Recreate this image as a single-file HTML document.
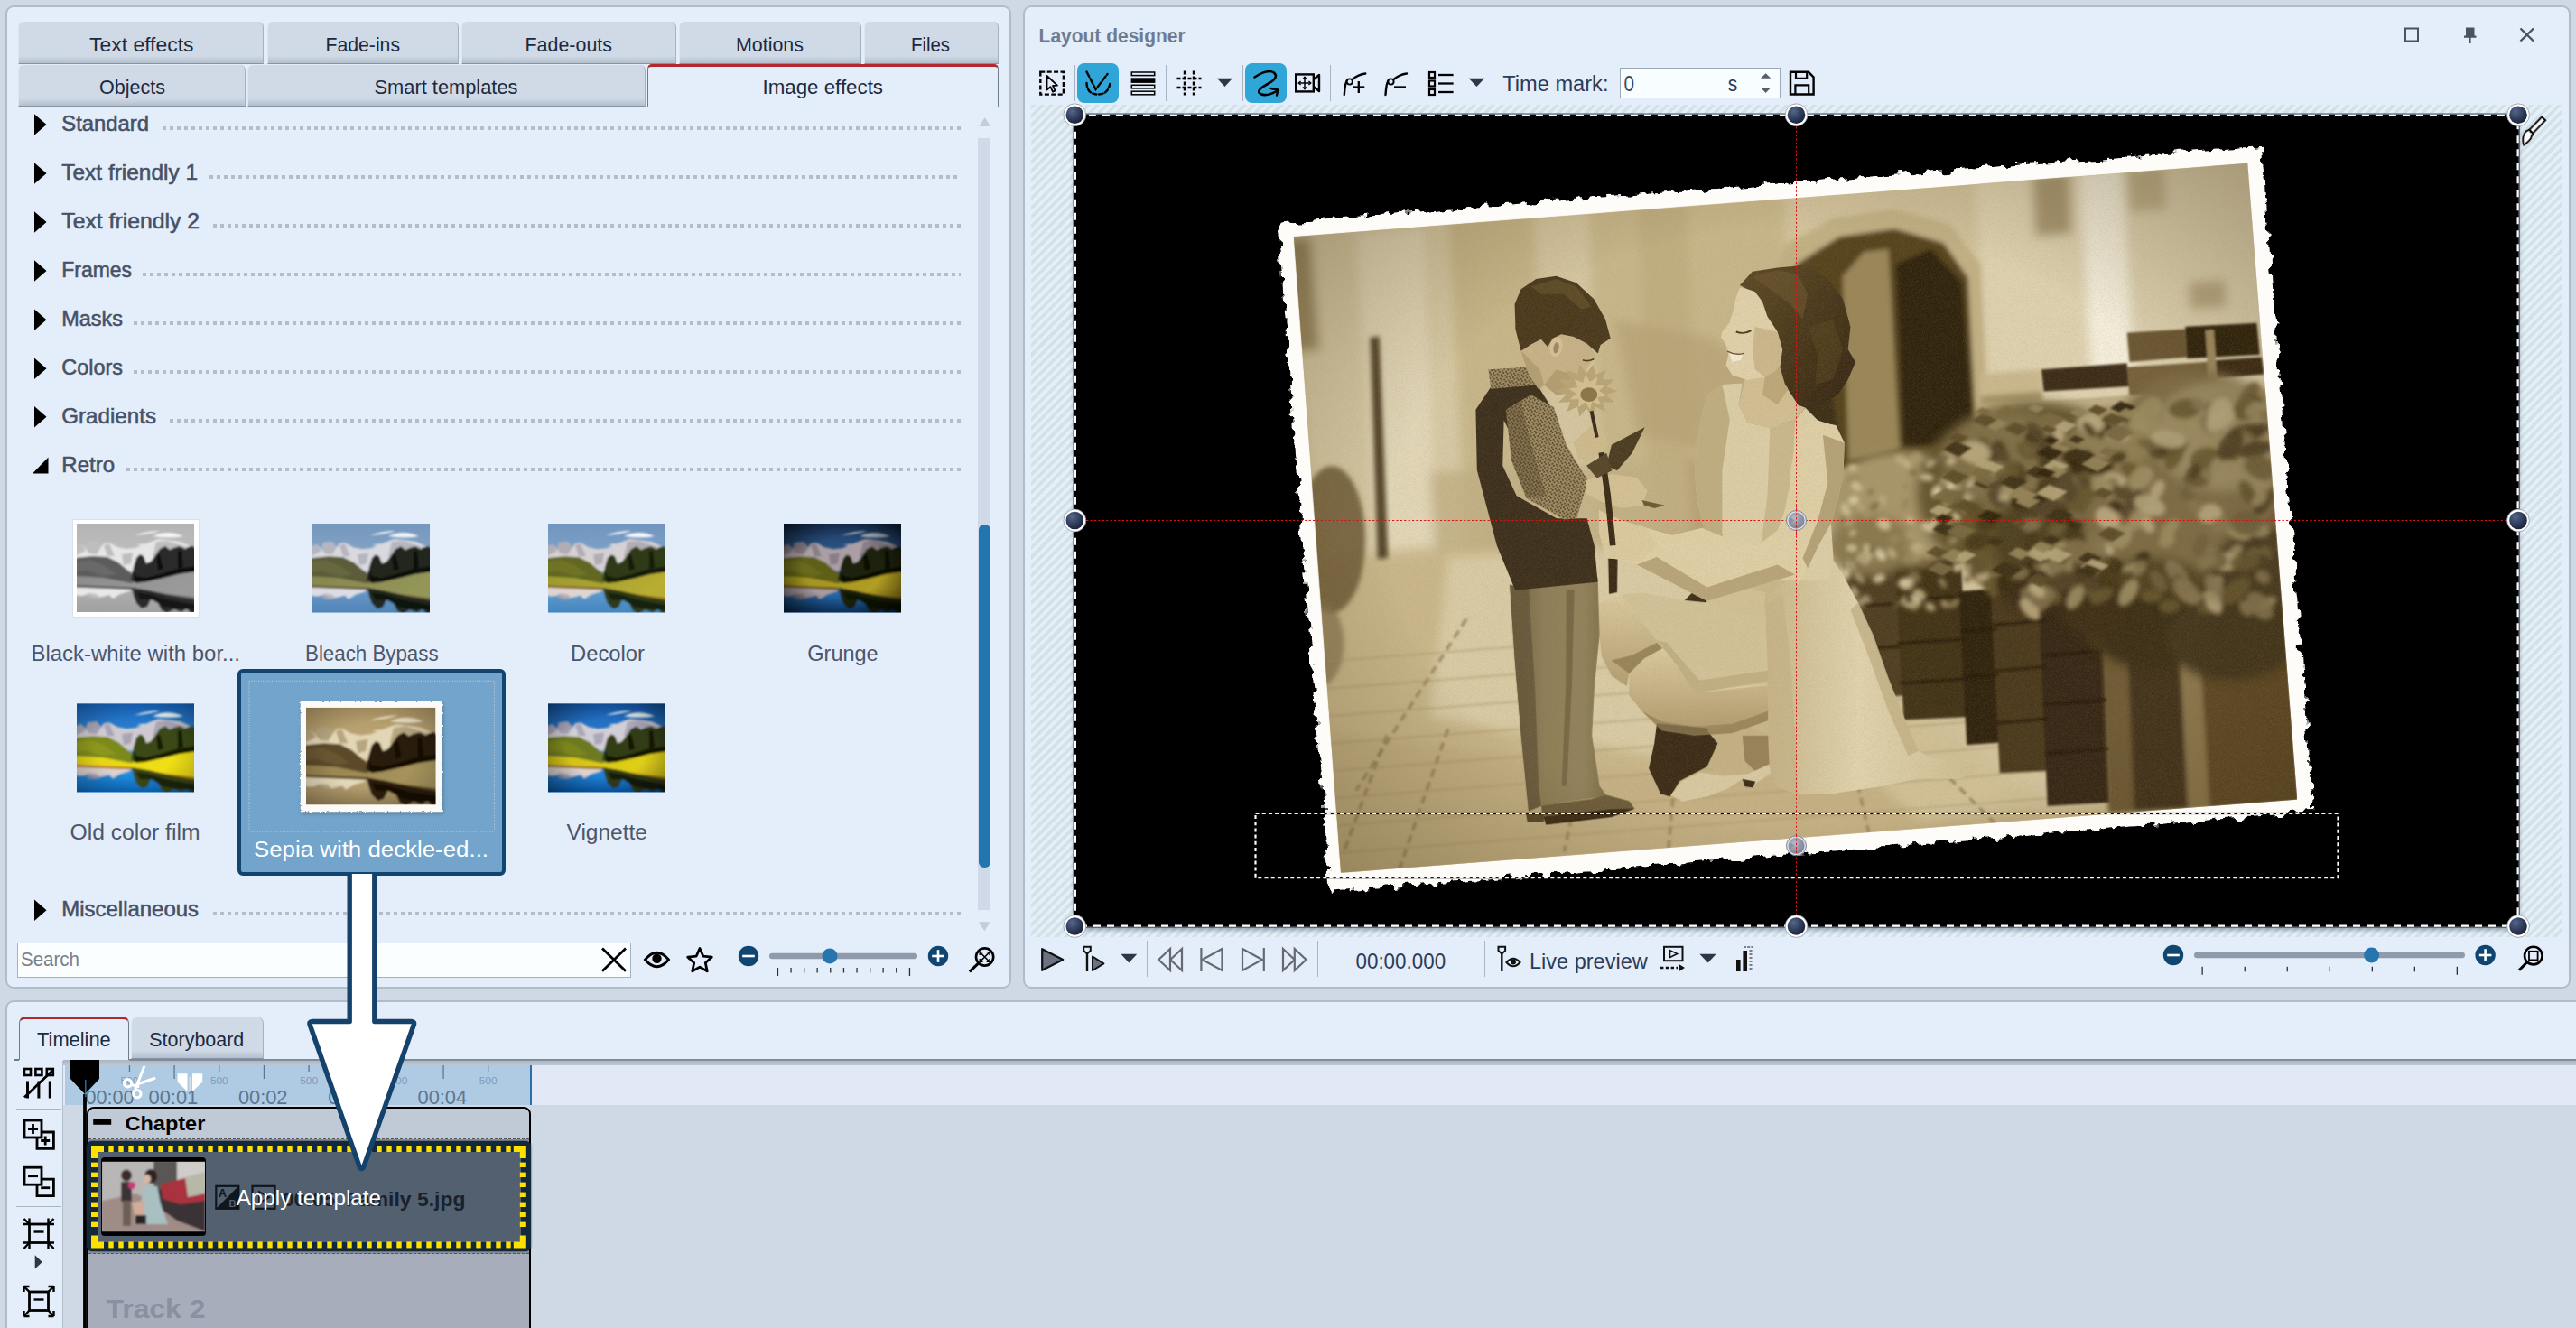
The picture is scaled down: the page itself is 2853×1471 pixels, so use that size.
<!DOCTYPE html>
<html lang="en"><head><meta charset="utf-8"><title>Layout designer - Image effects</title>
<style>
html,body{margin:0;padding:0}
body{width:2853px;height:1471px;overflow:hidden;background:#cfd9e6;position:relative;font-family:"Liberation Sans",sans-serif}
div{position:absolute;box-sizing:border-box}
#ov{position:absolute;left:0;top:0}
.panel{background:#e4edfa;border:2px solid #b1bccb;border-radius:9px}
.tab{background:linear-gradient(#d0d9e6 0,#d0d9e6 82%,#b4bfcd 100%);border-radius:6px 6px 0 0;border-right:1px solid #a6b1bf;border-left:1px solid #dde5ef;border-bottom:1px solid #8793a2}
.tabact{background:#e4edfa;border-top:3px solid #b2282c;border-left:1px solid #6f7c8c;border-right:1px solid #6f7c8c;border-radius:5px 5px 0 0}
.sep{width:1px;background:#a9b4c3}
.btnact{background:#30a5d8;border-radius:8px}

</style></head><body>
<div class="panel" style="left:6px;top:6px;width:1114px;height:1089px"></div>
<div class="tab" style="left:20.0px;top:24px;width:272.0px;height:46.5px"></div>
<div class="tab" style="left:296.0px;top:24px;width:212.0px;height:46.5px"></div>
<div class="tab" style="left:511.0px;top:24px;width:238.0px;height:46.5px"></div>
<div class="tab" style="left:752.0px;top:24px;width:201.5px;height:46.5px"></div>
<div class="tab" style="left:956.5px;top:24px;width:149.0px;height:46.5px"></div>
<div class="tab" style="left:20.0px;top:71.5px;width:251.5px;height:46.5px"></div>
<div class="tab" style="left:274.0px;top:71.5px;width:441.0px;height:46.5px"></div>
<div class="tabact" style="left:717px;top:71px;width:388.5px;height:48px"></div>
<div style="left:16px;top:117.5px;width:701px;height:1.5px;background:#6f7c8c"></div>
<div style="left:1105px;top:117.5px;width:6px;height:1.5px;background:#6f7c8c"></div>
<div style="left:180px;top:140.0px;width:884px;height:4px;background:repeating-linear-gradient(90deg,#b3bcc9 0,#b3bcc9 4px,transparent 4px,transparent 8px)"></div>
<div style="left:232px;top:194.0px;width:832px;height:4px;background:repeating-linear-gradient(90deg,#b3bcc9 0,#b3bcc9 4px,transparent 4px,transparent 8px)"></div>
<div style="left:236px;top:247.9px;width:828px;height:4px;background:repeating-linear-gradient(90deg,#b3bcc9 0,#b3bcc9 4px,transparent 4px,transparent 8px)"></div>
<div style="left:158px;top:301.9px;width:906px;height:4px;background:repeating-linear-gradient(90deg,#b3bcc9 0,#b3bcc9 4px,transparent 4px,transparent 8px)"></div>
<div style="left:148px;top:356.2px;width:916px;height:4px;background:repeating-linear-gradient(90deg,#b3bcc9 0,#b3bcc9 4px,transparent 4px,transparent 8px)"></div>
<div style="left:148px;top:410.2px;width:916px;height:4px;background:repeating-linear-gradient(90deg,#b3bcc9 0,#b3bcc9 4px,transparent 4px,transparent 8px)"></div>
<div style="left:188px;top:463.7px;width:876px;height:4px;background:repeating-linear-gradient(90deg,#b3bcc9 0,#b3bcc9 4px,transparent 4px,transparent 8px)"></div>
<div style="left:140px;top:517.7px;width:924px;height:4px;background:repeating-linear-gradient(90deg,#b3bcc9 0,#b3bcc9 4px,transparent 4px,transparent 8px)"></div>
<div style="left:236px;top:1010.2px;width:828px;height:4px;background:repeating-linear-gradient(90deg,#b3bcc9 0,#b3bcc9 4px,transparent 4px,transparent 8px)"></div>
<div style="left:1083px;top:153px;width:14px;height:855px;background:#d0d9e8"></div>
<div style="left:1084px;top:581px;width:12.5px;height:380px;background:#2176b0;border-radius:6px"></div>
<div style="left:80.5px;top:575.7px;width:139px;height:107.3px;background:#fff;box-shadow:0 0 1px #9aa"></div>
<div style="left:262.7px;top:740.5px;width:297.5px;height:229.7px;background:#73a5cc;border:4px solid #0f4570;border-radius:6px"></div>
<div style="left:18.5px;top:1043.5px;width:680.5px;height:39px;background:#fafeff;border:1px solid #a3b1c2"></div>
<div class="panel" style="left:1132.5px;top:6px;width:1714px;height:1089px"></div>
<div class="sep" style="left:1190.1px;top:72px;height:39.5px"></div>
<div class="sep" style="left:1290.9px;top:72px;height:39.5px"></div>
<div class="sep" style="left:1376.0px;top:72px;height:39.5px"></div>
<div class="sep" style="left:1473.1px;top:72px;height:39.5px"></div>
<div class="sep" style="left:1570.0px;top:72px;height:39.5px"></div>
<div class="btnact" style="left:1193.2px;top:70px;width:45.8px;height:44px"></div>
<div class="btnact" style="left:1379.1px;top:70px;width:45.8px;height:44px"></div>
<div style="left:1794px;top:75px;width:178px;height:34px;background:#f8fdff;border:1px solid #9aa8b8"></div>
<div style="left:1142px;top:116px;width:1695.5px;height:922px;background:repeating-linear-gradient(135deg,#d4e1e9 0,#d4e1e9 3.6px,#e4f0f8 3.6px,#e4f0f8 7.2px)"></div>
<div style="left:1190px;top:127px;width:1599.5px;height:899.5px;background:#000;box-shadow:0 3px 5px rgba(40,60,80,.45)"></div>
<div class="sep" style="left:1270.0px;top:1042px;height:40px;background:#aab5c4"></div>
<div class="sep" style="left:1458.8px;top:1042px;height:40px;background:#aab5c4"></div>
<div class="sep" style="left:1643.9px;top:1042px;height:40px;background:#aab5c4"></div>
<div class="panel" style="left:6px;top:1108px;width:2870px;height:400px"></div>
<div style="left:70px;top:1174px;width:2790px;height:300px;background:#cfd9e6"></div>
<div style="left:70px;top:1174px;width:2790px;height:6px;background:linear-gradient(#aab5c3,#bcc7d4)"></div>
<div style="left:70px;top:1180px;width:2790px;height:44px;background:#e0e9f5"></div>
<div style="left:72px;top:1180px;width:517px;height:44px;background:#afcbe3;border-right:2px solid #2a6fa8"></div>
<div style="left:69px;top:1175px;width:1.2px;height:300px;background:#b3becc"></div>
<div class="tabact" style="left:20.5px;top:1126px;width:122.5px;height:48px;border-top-width:3.6px;border-radius:7px 7px 0 0"></div>
<div class="tab" style="left:144.8px;top:1126px;width:147.2px;height:47px;border-radius:8px 8px 0 0"></div>
<div style="left:16px;top:1173px;width:5px;height:1.5px;background:#6f7c8c"></div>
<div style="left:143px;top:1173px;width:2720px;height:1.5px;background:#7f8b9a"></div>
<div style="left:18px;top:1227.6px;width:50px;height:1.2px;background:#aab5c3"></div>
<div style="left:18px;top:1336.2px;width:50px;height:1.2px;background:#aab5c3"></div>
<div style="left:95.5px;top:1226.2px;width:492.5px;height:260px;background:#a7adba;border:2px solid #000;border-radius:8px 8px 0 0"></div>
<div style="left:97.5px;top:1228.2px;width:488.5px;height:33.5px;background:#c0c9d6;border-radius:6px 6px 0 0;border-bottom:1px dashed #555"></div>
<div style="left:97.5px;top:1262px;width:488.5px;height:126.5px;background:#8c95a3;border-bottom:1px dashed #555"></div>
<div style="left:96px;top:1264.3px;width:492.3px;height:121.4px;background:#14283c;border-radius:6px;box-shadow:0 0 2px #0a1520"></div>
<div style="left:107.5px;top:1275.5px;width:469px;height:100px;background:#526070;border-radius:3px"></div>
<div style="left:112.2px;top:1282.4px;width:115.6px;height:86.3px;background:#000;border-radius:4px"></div>
<svg id="ov" width="2853" height="1471" viewBox="0 0 2853 1471" font-family="'Liberation Sans', sans-serif">
<text x="99.0" y="57.0" font-size="22.70" fill="#1c2a40" textLength="115.5" lengthAdjust="spacingAndGlyphs">Text effects</text>
<text x="360.5" y="57.0" font-size="22.70" fill="#1c2a40" textLength="82.5" lengthAdjust="spacingAndGlyphs">Fade-ins</text>
<text x="581.5" y="57.0" font-size="22.70" fill="#1c2a40" textLength="96.5" lengthAdjust="spacingAndGlyphs">Fade-outs</text>
<text x="815.0" y="57.0" font-size="22.70" fill="#1c2a40" textLength="75.0" lengthAdjust="spacingAndGlyphs">Motions</text>
<text x="1009.0" y="57.0" font-size="22.70" fill="#1c2a40" textLength="43.0" lengthAdjust="spacingAndGlyphs">Files</text>
<text x="110.0" y="104.0" font-size="22.70" fill="#1c2a40" textLength="73.0" lengthAdjust="spacingAndGlyphs">Objects</text>
<text x="414.5" y="104.0" font-size="22.70" fill="#1c2a40" textLength="159.0" lengthAdjust="spacingAndGlyphs">Smart templates</text>
<text x="844.5" y="104.0" font-size="22.70" fill="#1c2a40" textLength="133.5" lengthAdjust="spacingAndGlyphs">Image effects</text>
<path d="M38,126.3 L38,149.8 L51.5,138.0 Z" fill="#000"/>
<text x="68.3" y="144.8" font-size="23.20" fill="#475266" textLength="96.7" lengthAdjust="spacingAndGlyphs" stroke="#475266" stroke-width="0.55">Standard</text>
<path d="M38,180.3 L38,203.8 L51.5,192.0 Z" fill="#000"/>
<text x="68.3" y="198.8" font-size="23.20" fill="#475266" textLength="150.7" lengthAdjust="spacingAndGlyphs" stroke="#475266" stroke-width="0.55">Text friendly 1</text>
<path d="M38,234.2 L38,257.7 L51.5,245.9 Z" fill="#000"/>
<text x="68.3" y="252.7" font-size="23.20" fill="#475266" textLength="152.7" lengthAdjust="spacingAndGlyphs" stroke="#475266" stroke-width="0.55">Text friendly 2</text>
<path d="M38,288.2 L38,311.7 L51.5,299.9 Z" fill="#000"/>
<text x="68.3" y="306.7" font-size="23.20" fill="#475266" textLength="77.7" lengthAdjust="spacingAndGlyphs" stroke="#475266" stroke-width="0.55">Frames</text>
<path d="M38,342.5 L38,366.0 L51.5,354.2 Z" fill="#000"/>
<text x="68.3" y="361.0" font-size="23.20" fill="#475266" textLength="67.7" lengthAdjust="spacingAndGlyphs" stroke="#475266" stroke-width="0.55">Masks</text>
<path d="M38,396.5 L38,420.0 L51.5,408.2 Z" fill="#000"/>
<text x="68.3" y="415.0" font-size="23.20" fill="#475266" textLength="67.7" lengthAdjust="spacingAndGlyphs" stroke="#475266" stroke-width="0.55">Colors</text>
<path d="M38,450.0 L38,473.5 L51.5,461.7 Z" fill="#000"/>
<text x="68.3" y="468.5" font-size="23.20" fill="#475266" textLength="104.7" lengthAdjust="spacingAndGlyphs" stroke="#475266" stroke-width="0.55">Gradients</text>
<path d="M36,524.5 L53.5,524.5 L53.5,506.5 Z" fill="#000"/>
<text x="68.3" y="522.5" font-size="23.20" fill="#475266" textLength="58.7" lengthAdjust="spacingAndGlyphs" stroke="#475266" stroke-width="0.55">Retro</text>
<path d="M38,996.5 L38,1020.0 L51.5,1008.2 Z" fill="#000"/>
<text x="68.3" y="1015.0" font-size="23.20" fill="#475266" textLength="151.7" lengthAdjust="spacingAndGlyphs" stroke="#475266" stroke-width="0.55">Miscellaneous</text>
<path d="M1084.4,140 L1090.7,130 L1097,140 Z" fill="#c3ccda"/>
<path d="M1084,1021.3 L1096.6,1021.3 L1090.3,1031.3 Z" fill="#c3ccda"/>
<defs><filter id="tb" x="-5%" y="-5%" width="110%" height="110%"><feGaussianBlur stdDeviation="0.9"/></filter><filter id="tb2"><feGaussianBlur stdDeviation="2.2"/></filter></defs>
<defs><clipPath id="tc1"><rect x="0" y="0" width="130" height="98"/></clipPath><linearGradient id="ts1" x1="0" y1="0" x2="0" y2="1"><stop offset="0" stop-color="#b4b4b4"/><stop offset="1" stop-color="#d0d0d0"/></linearGradient><linearGradient id="tw1" x1="0" y1="0" x2="0" y2="1"><stop offset="0" stop-color="#b0b0b0"/><stop offset="1" stop-color="#a0a0a0"/></linearGradient><linearGradient id="tm1" x1="0" y1="0" x2="1" y2="0.3"><stop offset="0" stop-color="#8c8c8c"/><stop offset="1" stop-color="#9a9a9a"/></linearGradient><radialGradient id="tv1" cx="0.5" cy="0.5" r="0.75"><stop offset="0.45" stop-color="#000" stop-opacity="0"/><stop offset="1" stop-color="#000" stop-opacity="0.00"/></radialGradient></defs><g transform="translate(85.0,580.0) scale(1.0000,1.0000)" clip-path="url(#tc1)"><rect width="130" height="98" fill="url(#ts1)"/><g filter="url(#tb)"><path d="M64,13 Q78,8 92,8 Q86,11 64,13 Z M84,14 Q100,6 118,14 Q104,17 84,14 Z M66,24 Q74,21 82,24 Z" fill="#f4f4f4"/><path d="M-2,25 L5,23 L10,28 L12,21 L22,20 L27,26 L30,22 L36,21 L45,26 L55,28 L65,27 L72,24 L80,21 L90,17 L100,18 L115,20 L132,28 L132,55 L-2,50 Z" fill="#e6e6e6"/><path d="M10,28 L12,21 L22,20 L27,26 L22,34 L14,33 Z M30,24 L36,22 L42,36 L34,36 Z M-2,25 L5,23 L10,30 L-2,36 Z M50,34 L62,32 L60,44 L52,46 Z M88,20 L100,19 L122,26 L96,40 L84,36 Z" fill="#b0b0b0" opacity="0.75"/><rect x="-2" y="69" width="134" height="31" fill="url(#tw1)"/><path d="M-2,70 L62,71 L58,75 L48,78 L40,83 L36,79 L28,81 L20,82 L12,79 L4,80 L-2,79 Z" fill="#e8e8e8"/><path d="M10,78 L14,77 L22,78 L26,83 L18,84 L12,83 Z" fill="#b0b0b0" opacity="0.7"/><path d="M-2,38 L18,36 L34,37 L46,43 L58,53 L66,60 L66,70 L-2,66 Z" fill="#5c5c5c"/><path d="M-2,42 L14,40 L30,46 L44,56 L30,58 L10,52 L-2,54 Z" fill="#7a7a7a" opacity="0.45"/><path d="M-2,58 L30,60 L60,66 L80,60 L110,54 L132,50 L132,84 L100,80 L60,72 L-2,70 Z" fill="url(#tm1)"/><path d="M-2,68 L60,70.5 L100,78 L132,82 L132,85 L100,81 L60,73 L-2,70.5 Z" fill="#5a5a5a"/><path d="M60,62 L63,48 L66,38 L70,34 L74,36 L77,44 L82,42 L88,34 L92,28 L98,25 L103,29 L107,27 L114,25 L120,28 L123,26 L128,25 L132,28 L132,52 L116,55 L96,60 L78,64 L66,66 Z" fill="#2a2a2a"/><path d="M63,52 L66,58 L76,60 L92,56 L112,50 L132,47 L132,53 L112,56 L92,61 L74,65 L64,64 Z M88,36 L92,34 L96,50 L90,52 Z M112,30 L116,30 L118,48 L112,50 Z" fill="#111"/><path d="M61,71 L80,74 L100,79 L132,85 L132,99 L126,99 L122,94 L116,98 L108,95 L100,99 L94,96 L90,88 L82,84 L78,92 L72,94 L66,88 L63,80 Z" fill="#2a2a2a"/><path d="M66,76 L80,78 L100,84 L132,90 L132,96 L110,94 L96,92 L84,84 L70,84 Z" fill="#111" opacity="0.8"/></g></g>
<defs><clipPath id="tc2"><rect x="0" y="0" width="130" height="98"/></clipPath><linearGradient id="ts2" x1="0" y1="0" x2="0" y2="1"><stop offset="0" stop-color="#7597bd"/><stop offset="1" stop-color="#9fbcd5"/></linearGradient><linearGradient id="tw2" x1="0" y1="0" x2="0" y2="1"><stop offset="0" stop-color="#6c9ccb"/><stop offset="1" stop-color="#4f82b6"/></linearGradient><linearGradient id="tm2" x1="0" y1="0" x2="1" y2="0.3"><stop offset="0" stop-color="#85864e"/><stop offset="1" stop-color="#949658"/></linearGradient><radialGradient id="tv2" cx="0.5" cy="0.5" r="0.75"><stop offset="0.45" stop-color="#000" stop-opacity="0"/><stop offset="1" stop-color="#000" stop-opacity="0.00"/></radialGradient></defs><g transform="translate(346.0,580.0) scale(1.0000,1.0051)" clip-path="url(#tc2)"><rect width="130" height="98" fill="url(#ts2)"/><g filter="url(#tb)"><path d="M64,13 Q78,8 92,8 Q86,11 64,13 Z M84,14 Q100,6 118,14 Q104,17 84,14 Z M66,24 Q74,21 82,24 Z" fill="#eef3f8"/><path d="M-2,25 L5,23 L10,28 L12,21 L22,20 L27,26 L30,22 L36,21 L45,26 L55,28 L65,27 L72,24 L80,21 L90,17 L100,18 L115,20 L132,28 L132,55 L-2,50 Z" fill="#d9d9df"/><path d="M10,28 L12,21 L22,20 L27,26 L22,34 L14,33 Z M30,24 L36,22 L42,36 L34,36 Z M-2,25 L5,23 L10,30 L-2,36 Z M50,34 L62,32 L60,44 L52,46 Z M88,20 L100,19 L122,26 L96,40 L84,36 Z" fill="#a9a9b6" opacity="0.75"/><rect x="-2" y="69" width="134" height="31" fill="url(#tw2)"/><path d="M-2,70 L62,71 L58,75 L48,78 L40,83 L36,79 L28,81 L20,82 L12,79 L4,80 L-2,79 Z" fill="#dcdde4"/><path d="M10,78 L14,77 L22,78 L26,83 L18,84 L12,83 Z" fill="#a9a9b6" opacity="0.7"/><path d="M-2,38 L18,36 L34,37 L46,43 L58,53 L66,60 L66,70 L-2,66 Z" fill="#5b5c3a"/><path d="M-2,42 L14,40 L30,46 L44,56 L30,58 L10,52 L-2,54 Z" fill="#77784a" opacity="0.45"/><path d="M-2,58 L30,60 L60,66 L80,60 L110,54 L132,50 L132,84 L100,80 L60,72 L-2,70 Z" fill="url(#tm2)"/><path d="M-2,68 L60,70.5 L100,78 L132,82 L132,85 L100,81 L60,73 L-2,70.5 Z" fill="#6a5c3c"/><path d="M60,62 L63,48 L66,38 L70,34 L74,36 L77,44 L82,42 L88,34 L92,28 L98,25 L103,29 L107,27 L114,25 L120,28 L123,26 L128,25 L132,28 L132,52 L116,55 L96,60 L78,64 L66,66 Z" fill="#23271a"/><path d="M63,52 L66,58 L76,60 L92,56 L112,50 L132,47 L132,53 L112,56 L92,61 L74,65 L64,64 Z M88,36 L92,34 L96,50 L90,52 Z M112,30 L116,30 L118,48 L112,50 Z" fill="#0d0f08"/><path d="M61,71 L80,74 L100,79 L132,85 L132,99 L126,99 L122,94 L116,98 L108,95 L100,99 L94,96 L90,88 L82,84 L78,92 L72,94 L66,88 L63,80 Z" fill="#23271a"/><path d="M66,76 L80,78 L100,84 L132,90 L132,96 L110,94 L96,92 L84,84 L70,84 Z" fill="#0d0f08" opacity="0.8"/></g></g>
<defs><clipPath id="tc3"><rect x="0" y="0" width="130" height="98"/></clipPath><linearGradient id="ts3" x1="0" y1="0" x2="0" y2="1"><stop offset="0" stop-color="#7395bf"/><stop offset="1" stop-color="#86bcd9"/></linearGradient><linearGradient id="tw3" x1="0" y1="0" x2="0" y2="1"><stop offset="0" stop-color="#62a2d2"/><stop offset="1" stop-color="#4584bd"/></linearGradient><linearGradient id="tm3" x1="0" y1="0" x2="1" y2="0.3"><stop offset="0" stop-color="#9a982f"/><stop offset="1" stop-color="#b8ad33"/></linearGradient><radialGradient id="tv3" cx="0.5" cy="0.5" r="0.75"><stop offset="0.45" stop-color="#000" stop-opacity="0"/><stop offset="1" stop-color="#000" stop-opacity="0.00"/></radialGradient></defs><g transform="translate(607.0,580.0) scale(1.0000,1.0051)" clip-path="url(#tc3)"><rect width="130" height="98" fill="url(#ts3)"/><g filter="url(#tb)"><path d="M64,13 Q78,8 92,8 Q86,11 64,13 Z M84,14 Q100,6 118,14 Q104,17 84,14 Z M66,24 Q74,21 82,24 Z" fill="#f3f7fb"/><path d="M-2,25 L5,23 L10,28 L12,21 L22,20 L27,26 L30,22 L36,21 L45,26 L55,28 L65,27 L72,24 L80,21 L90,17 L100,18 L115,20 L132,28 L132,55 L-2,50 Z" fill="#d5d1d4"/><path d="M10,28 L12,21 L22,20 L27,26 L22,34 L14,33 Z M30,24 L36,22 L42,36 L34,36 Z M-2,25 L5,23 L10,30 L-2,36 Z M50,34 L62,32 L60,44 L52,46 Z M88,20 L100,19 L122,26 L96,40 L84,36 Z" fill="#a5a0aa" opacity="0.75"/><rect x="-2" y="69" width="134" height="31" fill="url(#tw3)"/><path d="M-2,70 L62,71 L58,75 L48,78 L40,83 L36,79 L28,81 L20,82 L12,79 L4,80 L-2,79 Z" fill="#ddd5d2"/><path d="M10,78 L14,77 L22,78 L26,83 L18,84 L12,83 Z" fill="#a5a0aa" opacity="0.7"/><path d="M-2,38 L18,36 L34,37 L46,43 L58,53 L66,60 L66,70 L-2,66 Z" fill="#626822"/><path d="M-2,42 L14,40 L30,46 L44,56 L30,58 L10,52 L-2,54 Z" fill="#80802a" opacity="0.45"/><path d="M-2,58 L30,60 L60,66 L80,60 L110,54 L132,50 L132,84 L100,80 L60,72 L-2,70 Z" fill="url(#tm3)"/><path d="M-2,68 L60,70.5 L100,78 L132,82 L132,85 L100,81 L60,73 L-2,70.5 Z" fill="#8a6a22"/><path d="M60,62 L63,48 L66,38 L70,34 L74,36 L77,44 L82,42 L88,34 L92,28 L98,25 L103,29 L107,27 L114,25 L120,28 L123,26 L128,25 L132,28 L132,52 L116,55 L96,60 L78,64 L66,66 Z" fill="#2f3a14"/><path d="M63,52 L66,58 L76,60 L92,56 L112,50 L132,47 L132,53 L112,56 L92,61 L74,65 L64,64 Z M88,36 L92,34 L96,50 L90,52 Z M112,30 L116,30 L118,48 L112,50 Z" fill="#141b07"/><path d="M61,71 L80,74 L100,79 L132,85 L132,99 L126,99 L122,94 L116,98 L108,95 L100,99 L94,96 L90,88 L82,84 L78,92 L72,94 L66,88 L63,80 Z" fill="#2f3a14"/><path d="M66,76 L80,78 L100,84 L132,90 L132,96 L110,94 L96,92 L84,84 L70,84 Z" fill="#141b07" opacity="0.8"/></g></g>
<defs><clipPath id="tc4"><rect x="0" y="0" width="130" height="98"/></clipPath><linearGradient id="ts4" x1="0" y1="0" x2="0" y2="1"><stop offset="0" stop-color="#1d3f6d"/><stop offset="1" stop-color="#4f7fa8"/></linearGradient><linearGradient id="tw4" x1="0" y1="0" x2="0" y2="1"><stop offset="0" stop-color="#2f74b4"/><stop offset="1" stop-color="#0f447e"/></linearGradient><linearGradient id="tm4" x1="0" y1="0" x2="1" y2="0.3"><stop offset="0" stop-color="#9a8f1f"/><stop offset="1" stop-color="#b5a022"/></linearGradient><radialGradient id="tv4" cx="0.5" cy="0.5" r="0.75"><stop offset="0.45" stop-color="#000" stop-opacity="0"/><stop offset="1" stop-color="#000" stop-opacity="0.85"/></radialGradient></defs><g transform="translate(868.0,580.0) scale(1.0000,1.0051)" clip-path="url(#tc4)"><rect width="130" height="98" fill="url(#ts4)"/><g filter="url(#tb)"><path d="M64,13 Q78,8 92,8 Q86,11 64,13 Z M84,14 Q100,6 118,14 Q104,17 84,14 Z M66,24 Q74,21 82,24 Z" fill="#b9c3cf"/><path d="M-2,25 L5,23 L10,28 L12,21 L22,20 L27,26 L30,22 L36,21 L45,26 L55,28 L65,27 L72,24 L80,21 L90,17 L100,18 L115,20 L132,28 L132,55 L-2,50 Z" fill="#aa9fa4"/><path d="M10,28 L12,21 L22,20 L27,26 L22,34 L14,33 Z M30,24 L36,22 L42,36 L34,36 Z M-2,25 L5,23 L10,30 L-2,36 Z M50,34 L62,32 L60,44 L52,46 Z M88,20 L100,19 L122,26 L96,40 L84,36 Z" fill="#7d737d" opacity="0.75"/><rect x="-2" y="69" width="134" height="31" fill="url(#tw4)"/><path d="M-2,70 L62,71 L58,75 L48,78 L40,83 L36,79 L28,81 L20,82 L12,79 L4,80 L-2,79 Z" fill="#a79ba0"/><path d="M10,78 L14,77 L22,78 L26,83 L18,84 L12,83 Z" fill="#7d737d" opacity="0.7"/><path d="M-2,38 L18,36 L34,37 L46,43 L58,53 L66,60 L66,70 L-2,66 Z" fill="#5d6118"/><path d="M-2,42 L14,40 L30,46 L44,56 L30,58 L10,52 L-2,54 Z" fill="#77741c" opacity="0.45"/><path d="M-2,58 L30,60 L60,66 L80,60 L110,54 L132,50 L132,84 L100,80 L60,72 L-2,70 Z" fill="url(#tm4)"/><path d="M-2,68 L60,70.5 L100,78 L132,82 L132,85 L100,81 L60,73 L-2,70.5 Z" fill="#6b4f12"/><path d="M60,62 L63,48 L66,38 L70,34 L74,36 L77,44 L82,42 L88,34 L92,28 L98,25 L103,29 L107,27 L114,25 L120,28 L123,26 L128,25 L132,28 L132,52 L116,55 L96,60 L78,64 L66,66 Z" fill="#1c2409"/><path d="M63,52 L66,58 L76,60 L92,56 L112,50 L132,47 L132,53 L112,56 L92,61 L74,65 L64,64 Z M88,36 L92,34 L96,50 L90,52 Z M112,30 L116,30 L118,48 L112,50 Z" fill="#0a0e03"/><path d="M61,71 L80,74 L100,79 L132,85 L132,99 L126,99 L122,94 L116,98 L108,95 L100,99 L94,96 L90,88 L82,84 L78,92 L72,94 L66,88 L63,80 Z" fill="#1c2409"/><path d="M66,76 L80,78 L100,84 L132,90 L132,96 L110,94 L96,92 L84,84 L70,84 Z" fill="#0a0e03" opacity="0.8"/></g><rect width="130" height="98" fill="url(#tv4)"/></g>
<defs><clipPath id="tc5"><rect x="0" y="0" width="130" height="98"/></clipPath><linearGradient id="ts5" x1="0" y1="0" x2="0" y2="1"><stop offset="0" stop-color="#1767c2"/><stop offset="1" stop-color="#62b6dd"/></linearGradient><linearGradient id="tw5" x1="0" y1="0" x2="0" y2="1"><stop offset="0" stop-color="#2a9ae4"/><stop offset="1" stop-color="#0c6bc6"/></linearGradient><linearGradient id="tm5" x1="0" y1="0" x2="1" y2="0.3"><stop offset="0" stop-color="#e2cf12"/><stop offset="1" stop-color="#f2e215"/></linearGradient><radialGradient id="tv5" cx="0.5" cy="0.5" r="0.75"><stop offset="0.45" stop-color="#000" stop-opacity="0"/><stop offset="1" stop-color="#000" stop-opacity="0.35"/></radialGradient></defs><g transform="translate(85.0,779.2) scale(1.0000,1.0020)" clip-path="url(#tc5)"><rect width="130" height="98" fill="url(#ts5)"/><g filter="url(#tb)"><path d="M64,13 Q78,8 92,8 Q86,11 64,13 Z M84,14 Q100,6 118,14 Q104,17 84,14 Z M66,24 Q74,21 82,24 Z" fill="#eef6fa"/><path d="M-2,25 L5,23 L10,28 L12,21 L22,20 L27,26 L30,22 L36,21 L45,26 L55,28 L65,27 L72,24 L80,21 L90,17 L100,18 L115,20 L132,28 L132,55 L-2,50 Z" fill="#cfcad0"/><path d="M10,28 L12,21 L22,20 L27,26 L22,34 L14,33 Z M30,24 L36,22 L42,36 L34,36 Z M-2,25 L5,23 L10,30 L-2,36 Z M50,34 L62,32 L60,44 L52,46 Z M88,20 L100,19 L122,26 L96,40 L84,36 Z" fill="#9c98ac" opacity="0.75"/><rect x="-2" y="69" width="134" height="31" fill="url(#tw5)"/><path d="M-2,70 L62,71 L58,75 L48,78 L40,83 L36,79 L28,81 L20,82 L12,79 L4,80 L-2,79 Z" fill="#dcd2cf"/><path d="M10,78 L14,77 L22,78 L26,83 L18,84 L12,83 Z" fill="#9c98ac" opacity="0.7"/><path d="M-2,38 L18,36 L34,37 L46,43 L58,53 L66,60 L66,70 L-2,66 Z" fill="#7b8a1e"/><path d="M-2,42 L14,40 L30,46 L44,56 L30,58 L10,52 L-2,54 Z" fill="#a1a51a" opacity="0.45"/><path d="M-2,58 L30,60 L60,66 L80,60 L110,54 L132,50 L132,84 L100,80 L60,72 L-2,70 Z" fill="url(#tm5)"/><path d="M-2,68 L60,70.5 L100,78 L132,82 L132,85 L100,81 L60,73 L-2,70.5 Z" fill="#b8790e"/><path d="M60,62 L63,48 L66,38 L70,34 L74,36 L77,44 L82,42 L88,34 L92,28 L98,25 L103,29 L107,27 L114,25 L120,28 L123,26 L128,25 L132,28 L132,52 L116,55 L96,60 L78,64 L66,66 Z" fill="#3b4a12"/><path d="M63,52 L66,58 L76,60 L92,56 L112,50 L132,47 L132,53 L112,56 L92,61 L74,65 L64,64 Z M88,36 L92,34 L96,50 L90,52 Z M112,30 L116,30 L118,48 L112,50 Z" fill="#161c05"/><path d="M61,71 L80,74 L100,79 L132,85 L132,99 L126,99 L122,94 L116,98 L108,95 L100,99 L94,96 L90,88 L82,84 L78,92 L72,94 L66,88 L63,80 Z" fill="#3b4a12"/><path d="M66,76 L80,78 L100,84 L132,90 L132,96 L110,94 L96,92 L84,84 L70,84 Z" fill="#161c05" opacity="0.8"/></g><rect width="130" height="98" fill="url(#tv5)"/></g>
<defs><clipPath id="tc6"><rect x="0" y="0" width="130" height="98"/></clipPath><linearGradient id="ts6" x1="0" y1="0" x2="0" y2="1"><stop offset="0" stop-color="#155fb8"/><stop offset="1" stop-color="#5aaedd"/></linearGradient><linearGradient id="tw6" x1="0" y1="0" x2="0" y2="1"><stop offset="0" stop-color="#2a92e0"/><stop offset="1" stop-color="#0b62bd"/></linearGradient><linearGradient id="tm6" x1="0" y1="0" x2="1" y2="0.3"><stop offset="0" stop-color="#cdbd18"/><stop offset="1" stop-color="#e3d21a"/></linearGradient><radialGradient id="tv6" cx="0.5" cy="0.5" r="0.75"><stop offset="0.45" stop-color="#000" stop-opacity="0"/><stop offset="1" stop-color="#000" stop-opacity="0.55"/></radialGradient></defs><g transform="translate(607.0,779.2) scale(1.0000,1.0020)" clip-path="url(#tc6)"><rect width="130" height="98" fill="url(#ts6)"/><g filter="url(#tb)"><path d="M64,13 Q78,8 92,8 Q86,11 64,13 Z M84,14 Q100,6 118,14 Q104,17 84,14 Z M66,24 Q74,21 82,24 Z" fill="#f0f6fb"/><path d="M-2,25 L5,23 L10,28 L12,21 L22,20 L27,26 L30,22 L36,21 L45,26 L55,28 L65,27 L72,24 L80,21 L90,17 L100,18 L115,20 L132,28 L132,55 L-2,50 Z" fill="#d2ced6"/><path d="M10,28 L12,21 L22,20 L27,26 L22,34 L14,33 Z M30,24 L36,22 L42,36 L34,36 Z M-2,25 L5,23 L10,30 L-2,36 Z M50,34 L62,32 L60,44 L52,46 Z M88,20 L100,19 L122,26 L96,40 L84,36 Z" fill="#9f9bb0" opacity="0.75"/><rect x="-2" y="69" width="134" height="31" fill="url(#tw6)"/><path d="M-2,70 L62,71 L58,75 L48,78 L40,83 L36,79 L28,81 L20,82 L12,79 L4,80 L-2,79 Z" fill="#dcd3d2"/><path d="M10,78 L14,77 L22,78 L26,83 L18,84 L12,83 Z" fill="#9f9bb0" opacity="0.7"/><path d="M-2,38 L18,36 L34,37 L46,43 L58,53 L66,60 L66,70 L-2,66 Z" fill="#6e7a20"/><path d="M-2,42 L14,40 L30,46 L44,56 L30,58 L10,52 L-2,54 Z" fill="#8c9220" opacity="0.45"/><path d="M-2,58 L30,60 L60,66 L80,60 L110,54 L132,50 L132,84 L100,80 L60,72 L-2,70 Z" fill="url(#tm6)"/><path d="M-2,68 L60,70.5 L100,78 L132,82 L132,85 L100,81 L60,73 L-2,70.5 Z" fill="#9a6f12"/><path d="M60,62 L63,48 L66,38 L70,34 L74,36 L77,44 L82,42 L88,34 L92,28 L98,25 L103,29 L107,27 L114,25 L120,28 L123,26 L128,25 L132,28 L132,52 L116,55 L96,60 L78,64 L66,66 Z" fill="#303d12"/><path d="M63,52 L66,58 L76,60 L92,56 L112,50 L132,47 L132,53 L112,56 L92,61 L74,65 L64,64 Z M88,36 L92,34 L96,50 L90,52 Z M112,30 L116,30 L118,48 L112,50 Z" fill="#121805"/><path d="M61,71 L80,74 L100,79 L132,85 L132,99 L126,99 L122,94 L116,98 L108,95 L100,99 L94,96 L90,88 L82,84 L78,92 L72,94 L66,88 L63,80 Z" fill="#303d12"/><path d="M66,76 L80,78 L100,84 L132,90 L132,96 L110,94 L96,92 L84,84 L70,84 Z" fill="#121805" opacity="0.8"/></g><rect width="130" height="98" fill="url(#tv6)"/></g>
<rect x="276" y="754.2" width="271.5" height="167" fill="none" stroke="#c9d6e2" stroke-width="1" stroke-dasharray="1 1.5" opacity="0.8"/>
<defs><filter id="dk" x="-5%" y="-5%" width="110%" height="110%"><feTurbulence type="fractalNoise" baseFrequency="0.35" numOctaves="2" seed="3"/><feDisplacementMap in="SourceGraphic" scale="3"/></filter></defs>
<rect x="334" y="779.5" width="157" height="122" fill="#35506a" opacity="0.45" filter="url(#tb2)"/>
<rect x="332.8" y="777" width="157" height="122.3" fill="#fbfaf6" filter="url(#dk)"/>
<defs><clipPath id="tc7"><rect x="0" y="0" width="130" height="98"/></clipPath><linearGradient id="ts7" x1="0" y1="0" x2="0" y2="1"><stop offset="0" stop-color="#b29a68"/><stop offset="1" stop-color="#ccb98e"/></linearGradient><linearGradient id="tw7" x1="0" y1="0" x2="0" y2="1"><stop offset="0" stop-color="#bda778"/><stop offset="1" stop-color="#9c875a"/></linearGradient><linearGradient id="tm7" x1="0" y1="0" x2="1" y2="0.3"><stop offset="0" stop-color="#93804e"/><stop offset="1" stop-color="#a8955e"/></linearGradient><radialGradient id="tv7" cx="0.5" cy="0.5" r="0.75"><stop offset="0.45" stop-color="#000" stop-opacity="0"/><stop offset="1" stop-color="#000" stop-opacity="0.30"/></radialGradient></defs><g transform="translate(339.0,783.7) scale(1.1038,1.0980)" clip-path="url(#tc7)"><rect width="130" height="98" fill="url(#ts7)"/><g filter="url(#tb)"><path d="M64,13 Q78,8 92,8 Q86,11 64,13 Z M84,14 Q100,6 118,14 Q104,17 84,14 Z M66,24 Q74,21 82,24 Z" fill="#efe6cc"/><path d="M-2,25 L5,23 L10,28 L12,21 L22,20 L27,26 L30,22 L36,21 L45,26 L55,28 L65,27 L72,24 L80,21 L90,17 L100,18 L115,20 L132,28 L132,55 L-2,50 Z" fill="#e2d6b6"/><path d="M10,28 L12,21 L22,20 L27,26 L22,34 L14,33 Z M30,24 L36,22 L42,36 L34,36 Z M-2,25 L5,23 L10,30 L-2,36 Z M50,34 L62,32 L60,44 L52,46 Z M88,20 L100,19 L122,26 L96,40 L84,36 Z" fill="#a8966c" opacity="0.75"/><rect x="-2" y="69" width="134" height="31" fill="url(#tw7)"/><path d="M-2,70 L62,71 L58,75 L48,78 L40,83 L36,79 L28,81 L20,82 L12,79 L4,80 L-2,79 Z" fill="#e3d8ba"/><path d="M10,78 L14,77 L22,78 L26,83 L18,84 L12,83 Z" fill="#a8966c" opacity="0.7"/><path d="M-2,38 L18,36 L34,37 L46,43 L58,53 L66,60 L66,70 L-2,66 Z" fill="#5b4a2a"/><path d="M-2,42 L14,40 L30,46 L44,56 L30,58 L10,52 L-2,54 Z" fill="#75623a" opacity="0.45"/><path d="M-2,58 L30,60 L60,66 L80,60 L110,54 L132,50 L132,84 L100,80 L60,72 L-2,70 Z" fill="url(#tm7)"/><path d="M-2,68 L60,70.5 L100,78 L132,82 L132,85 L100,81 L60,73 L-2,70.5 Z" fill="#5c4a28"/><path d="M60,62 L63,48 L66,38 L70,34 L74,36 L77,44 L82,42 L88,34 L92,28 L98,25 L103,29 L107,27 L114,25 L120,28 L123,26 L128,25 L132,28 L132,52 L116,55 L96,60 L78,64 L66,66 Z" fill="#2a1f0d"/><path d="M63,52 L66,58 L76,60 L92,56 L112,50 L132,47 L132,53 L112,56 L92,61 L74,65 L64,64 Z M88,36 L92,34 L96,50 L90,52 Z M112,30 L116,30 L118,48 L112,50 Z" fill="#120c04"/><path d="M61,71 L80,74 L100,79 L132,85 L132,99 L126,99 L122,94 L116,98 L108,95 L100,99 L94,96 L90,88 L82,84 L78,92 L72,94 L66,88 L63,80 Z" fill="#2a1f0d"/><path d="M66,76 L80,78 L100,84 L132,90 L132,96 L110,94 L96,92 L84,84 L70,84 Z" fill="#120c04" opacity="0.8"/></g><rect width="130" height="98" fill="url(#tv7)"/></g>
<text x="34.5" y="731.5" font-size="24.20" fill="#4c566b" textLength="231.5" lengthAdjust="spacingAndGlyphs">Black-white with bor...</text>
<text x="338.0" y="731.5" font-size="24.20" fill="#4c566b" textLength="147.6" lengthAdjust="spacingAndGlyphs">Bleach Bypass</text>
<text x="632.0" y="731.5" font-size="24.20" fill="#4c566b" textLength="82.0" lengthAdjust="spacingAndGlyphs">Decolor</text>
<text x="894.3" y="731.5" font-size="24.20" fill="#4c566b" textLength="78.4" lengthAdjust="spacingAndGlyphs">Grunge</text>
<text x="77.5" y="930.3" font-size="24.20" fill="#4c566b" textLength="144.0" lengthAdjust="spacingAndGlyphs">Old color film</text>
<text x="281.0" y="949.4" font-size="24.20" fill="#ffffff" textLength="260.0" lengthAdjust="spacingAndGlyphs">Sepia with deckle-ed...</text>
<text x="627.5" y="930.3" font-size="24.20" fill="#4c566b" textLength="89.5" lengthAdjust="spacingAndGlyphs">Vignette</text>
<text x="23.0" y="1070.0" font-size="22.50" fill="#7a7f88" textLength="65.0" lengthAdjust="spacingAndGlyphs">Search</text>
<path d="M667,1050.5 L693,1075.8 M693,1050.5 L667,1075.8" stroke="#000" stroke-width="2.8" fill="none"/>
<path d="M714.5,1063 Q727.5,1047.5 740.5,1063 Q727.5,1078.5 714.5,1063 Z" fill="none" stroke="#000" stroke-width="2.8"/><circle cx="727.5" cy="1061.8" r="5.2" fill="#000"/>
<polygon points="775.0,1050.5 778.9,1059.2 788.3,1060.2 781.3,1066.5 783.2,1075.8 775.0,1071.1 766.8,1075.8 768.7,1066.5 761.7,1060.2 771.1,1059.2" fill="none" stroke="#000" stroke-width="2.8" stroke-linejoin="round"/>
<circle cx="829.0" cy="1059.0" r="11.2" fill="#0e4671"/><rect x="822.2" y="1057.7" width="13.6" height="2.6" fill="#fff"/>
<circle cx="1039.0" cy="1059.0" r="11.2" fill="#0e4671"/><rect x="1032.2" y="1057.7" width="13.6" height="2.6" fill="#fff"/><rect x="1037.7" y="1052.2" width="2.6" height="13.6" fill="#fff"/>
<rect x="852.0" y="1055.7" width="164.0" height="6.6" rx="3.3" fill="#8f9bab"/>
<circle cx="919.0" cy="1059.0" r="8.5" fill="#2675ae"/>
<rect x="860.8" y="1072.0" width="1.3" height="9.0" fill="#2a3038"/>
<rect x="875.4" y="1072.0" width="1.3" height="5.5" fill="#2a3038"/>
<rect x="890.0" y="1072.0" width="1.3" height="5.5" fill="#2a3038"/>
<rect x="904.5" y="1072.0" width="1.3" height="5.5" fill="#2a3038"/>
<rect x="919.1" y="1072.0" width="1.3" height="5.5" fill="#2a3038"/>
<rect x="933.8" y="1072.0" width="1.3" height="5.5" fill="#2a3038"/>
<rect x="948.4" y="1072.0" width="1.3" height="5.5" fill="#2a3038"/>
<rect x="963.0" y="1072.0" width="1.3" height="5.5" fill="#2a3038"/>
<rect x="977.5" y="1072.0" width="1.3" height="5.5" fill="#2a3038"/>
<rect x="992.1" y="1072.0" width="1.3" height="5.5" fill="#2a3038"/>
<rect x="1006.8" y="1072.0" width="1.3" height="9.0" fill="#2a3038"/>
<circle cx="1090.6" cy="1060" r="9.6" fill="none" stroke="#000" stroke-width="2.6"/><path d="M1083.5,1067.2 L1073.8,1076.4" stroke="#000" stroke-width="3" fill="none"/>
<path d="M1085.6,1055 L1095.6,1065 M1095.6,1055 L1085.6,1065" stroke="#000" stroke-width="1.6"/><path d="M1085.2,1058 v-3.4 h3.4 M1092.6,1054.6 h3.4 v3.4 M1096,1062 v3.4 h-3.4 M1088.6,1065.4 h-3.4 v-3.4" stroke="#000" stroke-width="1.4" fill="none"/>
<text x="1150.6" y="47.2" font-size="22.00" fill="#6e7b90" font-weight="bold" textLength="162.0" lengthAdjust="spacingAndGlyphs">Layout designer</text>
<rect x="2664" y="31.5" width="14" height="14" fill="none" stroke="#485260" stroke-width="2"/>
<path d="M2731,30.5 h9.5 v9 h2 v2.2 h-13.5 v-2.2 h2 Z" fill="#485260"/><rect x="2734.8" y="41" width="1.8" height="7" fill="#485260"/>
<path d="M2791.5,31.5 L2806,45.5 M2806,31.5 L2791.5,45.5" stroke="#485260" stroke-width="2.4" fill="none"/>
<rect x="1152.3" y="79.6" width="25.6" height="25" fill="none" stroke="#000" stroke-width="2.4" stroke-dasharray="5 2.4"/>
<path d="M1159.5,84 L1159.5,99.5 L1163.4,96.2 L1166,101.6 L1168.6,100.4 L1166,95 L1171,94.6 Z" fill="#e4edfa" stroke="#000" stroke-width="1.8" stroke-linejoin="round"/>
<path d="M1203.5,79.5 L1213.5,99 L1226.5,82" fill="none" stroke="#000" stroke-width="2.4" stroke-dasharray="6 2.5" stroke-linecap="round"/>
<path d="M1203.5,92 Q1204,104.5 1216,104.5 Q1228,104.5 1229.5,91" fill="none" stroke="#000" stroke-width="2.4" stroke-dasharray="4.5 2.5" stroke-linecap="round"/>
<rect x="1253.3" y="80" width="25.4" height="3.6" fill="none" stroke="#000" stroke-width="1.5"/><rect x="1252.6" y="86.3" width="26.8" height="5.6" fill="#000"/><rect x="1253.3" y="94.3" width="25.4" height="3.6" fill="none" stroke="#000" stroke-width="1.5"/><rect x="1253.3" y="101.2" width="25.4" height="3.6" fill="none" stroke="#000" stroke-width="1.5"/>
<path d="M1312,78.5 V105.5 M1322,78.5 V105.5 M1303.5,87 H1330.5 M1303.5,97 H1330.5" stroke="#000" stroke-width="2.4" stroke-dasharray="4 2" fill="none"/>
<path d="M1347.9,86.8 L1365.0,86.8 L1356.5,96.1 Z" fill="#2d3748"/>
<path d="M1389.5,85.5 Q1404,76 1411,80.5 Q1417,86 1404,93 Q1390,100.5 1396,104 Q1403,107.5 1414.5,100.5" fill="none" stroke="#000" stroke-width="2.6" stroke-linecap="round"/>
<path d="M1407.5,98 L1415.3,99.5 L1414,105.5" fill="none" stroke="#000" stroke-width="2.4" stroke-linecap="round" stroke-linejoin="round"/>
<rect x="1435.2" y="82.4" width="19.6" height="19" fill="none" stroke="#000" stroke-width="2.4"/><path d="M1454.8,88 L1461,83 V101 L1454.8,96" fill="none" stroke="#000" stroke-width="2.4" stroke-linejoin="round"/>
<path d="M1445,85.5 V98.5 M1438.5,92 H1451.5" stroke="#000" stroke-width="1.5"/><path d="M1443,87.6 L1445,85.2 L1447,87.6 M1443,96.4 L1445,98.8 L1447,96.4 M1440.6,90 L1438.2,92 L1440.6,94 M1449.4,90 L1451.8,92 L1449.4,94" fill="none" stroke="#000" stroke-width="1.3"/>
<path d="M1488.8,105 Q1489.8,90 1492.8,88" fill="none" stroke="#000" stroke-width="2.4" stroke-linecap="round"/>
<circle cx="1494.8" cy="90.5" r="3.1" fill="#e4edfa" stroke="#000" stroke-width="1.9"/>
<path d="M1497.8,88 Q1504.3,82.5 1512.3,81.5" fill="none" stroke="#000" stroke-width="2.4" stroke-linecap="round"/>
<path d="M1498.3,96.5 H1511.3" stroke="#000" stroke-width="2.3"/>
<path d="M1504.8,90 V103" stroke="#000" stroke-width="2.3"/>
<path d="M1534.5,105 Q1535.5,90 1538.5,88" fill="none" stroke="#000" stroke-width="2.4" stroke-linecap="round"/>
<circle cx="1540.5" cy="90.5" r="3.1" fill="#e4edfa" stroke="#000" stroke-width="1.9"/>
<path d="M1543.5,88 Q1550.0,82.5 1558.0,81.5" fill="none" stroke="#000" stroke-width="2.4" stroke-linecap="round"/>
<path d="M1544.0,96.5 H1557.0" stroke="#000" stroke-width="2.3"/>
<rect x="1583" y="80.0" width="6" height="6" fill="none" stroke="#000" stroke-width="2.2"/><path d="M1593,83.0 H1609.6" stroke="#000" stroke-width="2.3"/>
<rect x="1583" y="89.5" width="6" height="6" fill="none" stroke="#000" stroke-width="2.2"/><path d="M1593,92.5 H1609.6" stroke="#000" stroke-width="2.3"/>
<rect x="1583" y="99.0" width="6" height="6" fill="none" stroke="#000" stroke-width="2.2"/><path d="M1593,102.0 H1609.6" stroke="#000" stroke-width="2.3"/>
<path d="M1626.7,86.8 L1644.2,86.8 L1635.5,96.1 Z" fill="#2d3748"/>
<text x="1664.3" y="100.8" font-size="23.50" fill="#2c3c58" textLength="117.2" lengthAdjust="spacingAndGlyphs">Time mark:</text>
<text x="1798.5" y="100.8" font-size="23.50" fill="#3a4a66" textLength="11.5" lengthAdjust="spacingAndGlyphs">0</text>
<text x="1913.8" y="100.8" font-size="23.50" fill="#2c3c58" textLength="10.5" lengthAdjust="spacingAndGlyphs">s</text>
<path d="M1950,86.8 L1961.3,86.8 L1955.6,81.2 Z M1950,97 L1961.3,97 L1955.6,103 Z" fill="#555f6b"/>
<path d="M1983,79.8 H2003 L2008.6,85.4 V104.5 H1983 Z" fill="none" stroke="#000" stroke-width="2.4" stroke-linejoin="miter"/><path d="M1989,80 V86.8 H2001.2 V80" fill="none" stroke="#000" stroke-width="2.2"/><path d="M1988.4,104.5 V94.4 H2003.2 V104.5" fill="none" stroke="#000" stroke-width="2.2"/>
<defs><filter id="deck" x="-3%" y="-3%" width="106%" height="106%"><feTurbulence type="fractalNoise" baseFrequency="0.05" numOctaves="3" seed="11" result="n"/><feDisplacementMap in="SourceGraphic" in2="n" scale="22" xChannelSelector="R" yChannelSelector="G"/><feGaussianBlur stdDeviation="1.1"/></filter><filter id="pb1"><feGaussianBlur stdDeviation="9"/></filter><filter id="pb2"><feGaussianBlur stdDeviation="4"/></filter><filter id="pb3"><feGaussianBlur stdDeviation="1.6"/></filter><filter id="pb4"><feGaussianBlur stdDeviation="16"/></filter><clipPath id="pclip"><path d="M78,195 L1637,75 L1718,1115 L155,1235 Z"/></clipPath><linearGradient id="pbg" x1="0" y1="0" x2="1" y2="0"><stop offset="0" stop-color="#cbb98f"/><stop offset="0.3" stop-color="#d9caa6"/><stop offset="0.6" stop-color="#d2c29c"/><stop offset="1" stop-color="#ddd0ae"/></linearGradient><radialGradient id="pvig" cx="0.5" cy="0.5" r="0.72"><stop offset="0.55" stop-color="#3a2a0c" stop-opacity="0"/><stop offset="1" stop-color="#3a2a0c" stop-opacity="0.42"/></radialGradient><filter id="grain" x="0" y="0" width="100%" height="100%"><feTurbulence type="fractalNoise" baseFrequency="0.9" numOctaves="2" seed="5"/><feColorMatrix type="matrix" values="0 0 0 0 0.35  0 0 0 0 0.27  0 0 0 0 0.12  0.5 0.5 0 0 -0.38"/></filter></defs>
<g transform="translate(1380,130) scale(0.67760)">
<path d="M52,172 L1660,47 L1745,1135 L137,1266 Z" fill="#fdfcf9" filter="url(#deck)"/>
<g clip-path="url(#pclip)">
<rect x="60" y="60" width="1700" height="1200" fill="url(#pbg)"/>
<g filter="url(#pb1)"><path d="M60,180 L330,160 L360,700 L120,720 Z" fill="#d8caa6"/><path d="M180,190 L290,180 L310,700 L215,705 Z" fill="#e3d8ba"/><path d="M60,200 L105,195 L120,380 L70,385 Z" fill="#9c8a64"/><path d="M330,160 L880,120 L900,690 L360,705 Z" fill="#c9b78c"/><path d="M470,160 L560,150 L580,700 L500,705 Z" fill="#d9cba8" opacity="0.8"/><path d="M640,140 L720,135 L740,690 L665,695 Z" fill="#bfac80" opacity="0.8"/><path d="M600,330 L760,360 L840,420 L850,560 L640,520 Z" fill="#b8a478" opacity="0.8"/><path d="M720,560 L900,540 L905,700 L730,705 Z" fill="#b5a074" opacity="0.8"/><path d="M300,580 L720,560 L730,700 L310,720 Z" fill="#c2af86" opacity="0.8"/><path d="M1190,90 L1650,60 L1680,470 L1215,500 Z" fill="#dfd3b2"/><path d="M1362,85 L1432,80 L1452,420 L1382,425 Z" fill="#f6f0de"/><path d="M1285,95 L1345,90 L1350,190 L1290,195 Z" fill="#9a8862" opacity="0.8"/><path d="M1440,85 L1500,80 L1505,150 L1445,155 Z" fill="#b3a27c" opacity="0.7"/><path d="M1540,270 L1600,265 L1603,310 L1543,315 Z" fill="#a8966e" opacity="0.7"/></g>
<g filter="url(#pb2)"><path d="M850,600 L845,300 L880,210 L960,165 L1060,150 L1150,175 L1200,240 L1215,560 Z" fill="#c3b186"/><path d="M878,590 L872,320 L900,240 L970,195 L1060,182 L1140,205 L1180,262 L1195,545 Z" fill="#55431f"/><path d="M985,560 L975,260 L1010,220 L1050,215 L1068,540 Z" fill="#9a8658"/><path d="M1075,540 L1062,240 L1120,215 L1170,270 L1190,530 Z" fill="#2e2210"/><path d="M880,590 L875,420 L950,400 L975,560 Z" fill="#3b2d14"/></g>
<g filter="url(#pb1)"><path d="M60,740 L330,712 L900,690 L1000,930 L1320,1130 L1760,1100 L1760,1280 L60,1290 Z" fill="#cab78c"/><path d="M330,720 L780,700 L900,900 L700,1050 L300,980 Z" fill="#dccea9" opacity="0.9"/><path d="M100,1000 L700,1080 L1200,1060 L1300,1140 L1300,1260 L100,1260 Z" fill="#c4b084" opacity="0.9"/><path d="M1080,960 L1200,1040 L1330,1130 L1100,1150 L1000,1060 Z" fill="#d2c198"/></g>
<g filter="url(#pb2)"><ellipse cx="140" cy="690" rx="55" ry="120" fill="#6d5b36" opacity="0.85"/><ellipse cx="120" cy="860" rx="40" ry="70" fill="#857250" opacity="0.7"/><path d="M203,360 L218,358 L232,720 L215,722 Z" fill="#54442a"/></g>
<g filter="url(#pb3)"><path d="M230,1010 L160,1200" stroke="#8f7c54" stroke-width="5" stroke-dasharray="14 9" opacity="0.75"/><path d="M330,1000 L250,1230" stroke="#8f7c54" stroke-width="5" stroke-dasharray="14 9" opacity="0.75"/><path d="M360,820 L180,1100" stroke="#8f7c54" stroke-width="5" stroke-dasharray="14 9" opacity="0.75"/><path d="M560,1010 L520,1200" stroke="#8f7c54" stroke-width="5" stroke-dasharray="14 9" opacity="0.75"/><path d="M700,1090 L690,1200" stroke="#8f7c54" stroke-width="5" stroke-dasharray="14 9" opacity="0.75"/><path d="M1000,1090 L1020,1180" stroke="#8f7c54" stroke-width="5" stroke-dasharray="14 9" opacity="0.75"/><path d="M1150,1080 L1240,1170" stroke="#8f7c54" stroke-width="5" stroke-dasharray="14 9" opacity="0.75"/><path d="M120,890 L1350,795" stroke="#a8956a" stroke-width="2.5" opacity="0.55"/><path d="M120,935 L1350,840" stroke="#a8956a" stroke-width="2.5" opacity="0.55"/><path d="M120,980 L1350,885" stroke="#a8956a" stroke-width="2.5" opacity="0.55"/><path d="M120,1025 L1350,930" stroke="#a8956a" stroke-width="2.5" opacity="0.55"/><path d="M120,1070 L1350,975" stroke="#a8956a" stroke-width="2.5" opacity="0.55"/><path d="M120,1115 L1350,1020" stroke="#a8956a" stroke-width="2.5" opacity="0.55"/><path d="M120,1160 L1350,1065" stroke="#a8956a" stroke-width="2.5" opacity="0.55"/><path d="M120,1205 L1350,1110" stroke="#a8956a" stroke-width="2.5" opacity="0.55"/></g>
<g filter="url(#pb2)"><path d="M1200,420 L1300,412 L1306,500 L1206,508 Z" fill="#cbb98f"/><path d="M1200,455 L1300,448 L1302,462 L1202,470 Z" fill="#a8966c"/></g>
<g filter="url(#pb3)"><path d="M1440,352 L1535,346 L1538,392 L1444,400 Z" fill="#6a5530"/><path d="M1535,342 L1652,336 L1657,388 L1538,394 Z" fill="#2f2310"/><path d="M1300,412 L1440,402 L1443,440 L1304,448 Z" fill="#3a2c15"/><path d="M1440,408 L1570,400 L1574,446 L1444,456 Z" fill="#75603a"/><path d="M1570,398 L1660,392 L1664,420 L1574,428 Z" fill="#3a2c15"/><path d="M1568,348 L1582,347 L1590,470 L1576,471 Z" fill="#a08c60"/><path d="M1210,470 L1660,440 L1664,470 L1214,500 Z" fill="#b9a77e" opacity="0.8"/></g>
<g filter="url(#pb3)"><path d="M975,722 L1062,716 L1075,945 L990,952 Z" fill="#4f3d20"/><path d="M1060,716 L1168,708 L1180,980 L1075,985 Z" fill="#3f3018"/><path d="M1165,775 L1225,770 L1232,1022 L1178,1026 Z" fill="#2f2310"/><path d="M1216,752 L1300,745 L1312,1068 L1232,1072 Z" fill="#4a381c"/><path d="M1296,800 L1400,792 L1412,1120 L1310,1126 Z" fill="#352812"/></g>
<g filter="url(#pb2)"><path d="M1396,840 L1530,830 L1542,1130 L1410,1136 Z" fill="#43331a"/><path d="M1526,880 L1730,865 L1740,1120 L1540,1132 Z" fill="#5e4a28"/><path d="M1526,880 L1560,878 L1575,1128 L1540,1132 Z" fill="#8d7850"/><path d="M1400,850 L1440,848 L1452,1132 L1412,1134 Z" fill="#6e5a34"/></g>
<g filter="url(#pb3)"><path d="M1062,790 L1168,783" stroke="#241a0a" stroke-width="4" opacity="0.8"/><path d="M1065,860 L1172,853" stroke="#241a0a" stroke-width="4" opacity="0.8"/><path d="M1068,925 L1176,918" stroke="#241a0a" stroke-width="4" opacity="0.8"/><path d="M1168,840 L1226,836" stroke="#241a0a" stroke-width="4" opacity="0.8"/><path d="M1172,915 L1229,911" stroke="#241a0a" stroke-width="4" opacity="0.8"/><path d="M1220,830 L1303,823" stroke="#241a0a" stroke-width="4" opacity="0.8"/><path d="M1224,905 L1306,898" stroke="#241a0a" stroke-width="4" opacity="0.8"/><path d="M1228,990 L1310,983" stroke="#241a0a" stroke-width="4" opacity="0.8"/><path d="M978,800 L1064,795" stroke="#241a0a" stroke-width="4" opacity="0.8"/><path d="M982,870 L1068,865" stroke="#241a0a" stroke-width="4" opacity="0.8"/><path d="M1300,880 L1402,872" stroke="#241a0a" stroke-width="4" opacity="0.8"/><path d="M1304,960 L1406,952" stroke="#241a0a" stroke-width="4" opacity="0.8"/><path d="M1308,1040 L1410,1032" stroke="#241a0a" stroke-width="4" opacity="0.8"/></g>
<g filter="url(#pb1)"><ellipse cx="1070" cy="640" rx="125" ry="95" fill="#a8966c"/><ellipse cx="1020" cy="700" rx="70" ry="50" fill="#8a7850"/><ellipse cx="1290" cy="615" rx="195" ry="150" fill="#65542f"/><ellipse cx="1250" cy="560" rx="110" ry="80" fill="#7f6e46"/><ellipse cx="1340" cy="690" rx="120" ry="90" fill="#4e3f22"/><ellipse cx="1560" cy="650" rx="195" ry="235" fill="#7d6b44"/><ellipse cx="1600" cy="520" rx="120" ry="90" fill="#998860"/><ellipse cx="1480" cy="810" rx="120" ry="90" fill="#524222"/><ellipse cx="1655" cy="790" rx="90" ry="120" fill="#4a3a20"/><ellipse cx="1420" cy="525" rx="70" ry="50" fill="#8f7d55"/><ellipse cx="1480" cy="840" rx="95" ry="60" fill="#3a2d14"/><ellipse cx="1610" cy="850" rx="105" ry="70" fill="#43341a"/><ellipse cx="1385" cy="800" rx="60" ry="50" fill="#3d2f16"/><ellipse cx="1300" cy="770" rx="60" ry="40" fill="#3a2c14"/></g>
<g filter="url(#pb2)"><ellipse cx="1214.64" cy="568.998" rx="20.415" ry="15.0549" fill="#45361a" opacity="0.9" transform="rotate(-56.8218 1214.64 568.998)"/><ellipse cx="1406.26" cy="776.444" rx="13.4352" ry="8.08496" fill="#45361a" opacity="0.9" transform="rotate(-60.2202 1406.26 776.444)"/><ellipse cx="1042.13" cy="664.913" rx="11.6148" ry="9.07823" fill="#d2c49c" opacity="0.9" transform="rotate(18.2876 1042.13 664.913)"/><ellipse cx="1406.42" cy="508.282" rx="19.3687" ry="15.334" fill="#45361a" opacity="0.9" transform="rotate(-63.4784 1406.42 508.282)"/><ellipse cx="1610.27" cy="551.353" rx="14.5966" ry="9.48515" fill="#65542f" opacity="0.9" transform="rotate(8.43602 1610.27 551.353)"/><ellipse cx="1479.68" cy="508.168" rx="22.2817" ry="12.9309" fill="#9a8960" opacity="0.9" transform="rotate(6.68423 1479.68 508.168)"/><ellipse cx="1021.46" cy="579.969" rx="6.64767" ry="4.2286" fill="#a99870" opacity="0.9" transform="rotate(38.812 1021.46 579.969)"/><ellipse cx="1319.55" cy="782.116" rx="15.7853" ry="11.4922" fill="#65542f" opacity="0.9" transform="rotate(27.8592 1319.55 782.116)"/><ellipse cx="1155.63" cy="691.743" rx="9.20157" ry="6.48992" fill="#97855c" opacity="0.9" transform="rotate(-29.6887 1155.63 691.743)"/><ellipse cx="1700.33" cy="474.217" rx="19.5262" ry="9.82548" fill="#b5a47c" opacity="0.9" transform="rotate(-1.54517 1700.33 474.217)"/><ellipse cx="1004.01" cy="726.764" rx="11.1166" ry="8.07266" fill="#75643f" opacity="0.9" transform="rotate(44.5695 1004.01 726.764)"/><ellipse cx="1226.69" cy="622.83" rx="17.9468" ry="10.9417" fill="#54442a" opacity="0.9" transform="rotate(47.5955 1226.69 622.83)"/><ellipse cx="1674.06" cy="610.515" rx="23.9547" ry="16.9098" fill="#65542f" opacity="0.9" transform="rotate(-26.655 1674.06 610.515)"/><ellipse cx="1402.68" cy="704.419" rx="17.1303" ry="10.0217" fill="#bcab82" opacity="0.9" transform="rotate(23.6114 1402.68 704.419)"/><ellipse cx="991.697" cy="679.392" rx="6.34439" ry="3.95124" fill="#d2c49c" opacity="0.9" transform="rotate(-39.4509 991.697 679.392)"/><ellipse cx="1187.7" cy="733.694" rx="8.18318" ry="3.91323" fill="#ddd0ac" opacity="0.9" transform="rotate(-7.11376 1187.7 733.694)"/><ellipse cx="1381.59" cy="768.695" rx="23.1085" ry="14.849" fill="#54442a" opacity="0.9" transform="rotate(28.8955 1381.59 768.695)"/><ellipse cx="1704.99" cy="685.705" rx="18.8479" ry="9.47717" fill="#9a8960" opacity="0.9" transform="rotate(-45.3295 1704.99 685.705)"/><ellipse cx="1146.65" cy="602.348" rx="8.8797" ry="4.56257" fill="#75643f" opacity="0.9" transform="rotate(-30.5297 1146.65 602.348)"/><ellipse cx="1082.8" cy="687.922" rx="9.8785" ry="7.74064" fill="#97855c" opacity="0.9" transform="rotate(26.6691 1082.8 687.922)"/><ellipse cx="1356.46" cy="687.871" rx="20.8192" ry="12.6961" fill="#45361a" opacity="0.9" transform="rotate(51.9371 1356.46 687.871)"/><ellipse cx="1679.4" cy="686.532" rx="22.0669" ry="13.0116" fill="#4d3d22" opacity="0.9" transform="rotate(-55.5048 1679.4 686.532)"/><ellipse cx="1444.37" cy="501.286" rx="11.0776" ry="6.69328" fill="#65542f" opacity="0.9" transform="rotate(-54.61 1444.37 501.286)"/><ellipse cx="1419.54" cy="518.742" rx="19.0685" ry="9.25801" fill="#9f8e64" opacity="0.9" transform="rotate(-19.0946 1419.54 518.742)"/><ellipse cx="993.871" cy="775.622" rx="9.91255" ry="6.66166" fill="#bfae84" opacity="0.9" transform="rotate(63.7655 993.871 775.622)"/><ellipse cx="1420.69" cy="637.182" rx="11.8457" ry="9.44793" fill="#35280f" opacity="0.9" transform="rotate(-4.76148 1420.69 637.182)"/><ellipse cx="1333.04" cy="529.296" rx="11.635" ry="8.25065" fill="#82704a" opacity="0.9" transform="rotate(-2.99293 1333.04 529.296)"/><ellipse cx="1487.12" cy="644.218" rx="15.6939" ry="9.0493" fill="#857350" opacity="0.9" transform="rotate(26.6095 1487.12 644.218)"/><ellipse cx="1651.47" cy="716.651" rx="17.3656" ry="13.0618" fill="#6f5e3a" opacity="0.9" transform="rotate(27.4676 1651.47 716.651)"/><ellipse cx="1168.23" cy="634.867" rx="6.33634" ry="4.03249" fill="#bfae84" opacity="0.9" transform="rotate(39.0677 1168.23 634.867)"/><ellipse cx="1218.95" cy="588.391" rx="22.9842" ry="17.2018" fill="#54442a" opacity="0.9" transform="rotate(42.851 1218.95 588.391)"/><ellipse cx="1580.57" cy="713.666" rx="16.0813" ry="10.0102" fill="#857350" opacity="0.9" transform="rotate(32.3406 1580.57 713.666)"/><ellipse cx="1707.31" cy="725.986" rx="20.5003" ry="14.1941" fill="#9a8960" opacity="0.9" transform="rotate(63.9121 1707.31 725.986)"/><ellipse cx="1305.95" cy="786.346" rx="25.8086" ry="12.3414" fill="#82704a" opacity="0.9" transform="rotate(-55.698 1305.95 786.346)"/><ellipse cx="1322.86" cy="606.605" rx="17.7225" ry="13.1882" fill="#9f8e64" opacity="0.9" transform="rotate(-2.87372 1322.86 606.605)"/><ellipse cx="1458.2" cy="739.555" rx="11.3565" ry="5.58699" fill="#bcab82" opacity="0.9" transform="rotate(-15.605 1458.2 739.555)"/><ellipse cx="1501.5" cy="536.531" rx="28.0022" ry="20.3351" fill="#4d3d22" opacity="0.9" transform="rotate(-23.4476 1501.5 536.531)"/><ellipse cx="1567.61" cy="795.122" rx="19.1251" ry="13.5821" fill="#4d3d22" opacity="0.9" transform="rotate(-58.1113 1567.61 795.122)"/><ellipse cx="1092.55" cy="803.254" rx="5.22039" ry="4.00246" fill="#75643f" opacity="0.9" transform="rotate(42.9103 1092.55 803.254)"/><ellipse cx="1083.17" cy="761.344" rx="12.8424" ry="9.99288" fill="#a99870" opacity="0.9" transform="rotate(-48.1723 1083.17 761.344)"/><ellipse cx="1380.73" cy="500.511" rx="22.7897" ry="15.4374" fill="#bcab82" opacity="0.9" transform="rotate(3.72135 1380.73 500.511)"/><ellipse cx="1665.88" cy="596.542" rx="27.6914" ry="12.7324" fill="#9a8960" opacity="0.9" transform="rotate(-40.2108 1665.88 596.542)"/><ellipse cx="1345.86" cy="733.118" rx="15.2158" ry="9.07859" fill="#9f8e64" opacity="0.9" transform="rotate(-51.6497 1345.86 733.118)"/><ellipse cx="1648.41" cy="569.336" rx="20.2469" ry="14.8869" fill="#857350" opacity="0.9" transform="rotate(2.34652 1648.41 569.336)"/><ellipse cx="1587.08" cy="762.065" rx="14.3537" ry="9.08918" fill="#9a8960" opacity="0.9" transform="rotate(-67.3813 1587.08 762.065)"/><ellipse cx="1300.69" cy="563.904" rx="10.0629" ry="5.05592" fill="#54442a" opacity="0.9" transform="rotate(-50.1817 1300.69 563.904)"/><ellipse cx="1433.13" cy="522.077" rx="10.9881" ry="6.93812" fill="#bcab82" opacity="0.9" transform="rotate(7.76186 1433.13 522.077)"/><ellipse cx="1555.36" cy="495.649" rx="22.0853" ry="11.4172" fill="#9a8960" opacity="0.9" transform="rotate(-64.0922 1555.36 495.649)"/><ellipse cx="1047.33" cy="671.075" rx="5.22293" ry="3.16059" fill="#d2c49c" opacity="0.9" transform="rotate(15.7539 1047.33 671.075)"/><ellipse cx="1349.11" cy="656.296" rx="21.0837" ry="13.2375" fill="#35280f" opacity="0.9" transform="rotate(43.0307 1349.11 656.296)"/><ellipse cx="1350.74" cy="575.424" rx="18.3714" ry="14.2006" fill="#82704a" opacity="0.9" transform="rotate(54.9857 1350.74 575.424)"/><ellipse cx="1124.92" cy="661.367" rx="8.3331" ry="5.03937" fill="#ddd0ac" opacity="0.9" transform="rotate(-59.8435 1124.92 661.367)"/><ellipse cx="1153.07" cy="558.807" rx="10.3558" ry="7.91139" fill="#d2c49c" opacity="0.9" transform="rotate(-48.3775 1153.07 558.807)"/><ellipse cx="1504.93" cy="690.851" rx="14.5736" ry="11.4934" fill="#9a8960" opacity="0.9" transform="rotate(-39.2577 1504.93 690.851)"/><ellipse cx="1679.85" cy="581.771" rx="20.7707" ry="15.3985" fill="#6f5e3a" opacity="0.9" transform="rotate(-47.3948 1679.85 581.771)"/><ellipse cx="1294.33" cy="662.653" rx="15.4259" ry="8.86702" fill="#65542f" opacity="0.9" transform="rotate(-57.0928 1294.33 662.653)"/><ellipse cx="1245.8" cy="616.88" rx="17.3387" ry="7.91216" fill="#bcab82" opacity="0.9" transform="rotate(-23.5903 1245.8 616.88)"/><ellipse cx="1436.71" cy="647.782" rx="11.0287" ry="5.84512" fill="#54442a" opacity="0.9" transform="rotate(52.6949 1436.71 647.782)"/><ellipse cx="1037.21" cy="628.484" rx="12.2472" ry="6.67051" fill="#bfae84" opacity="0.9" transform="rotate(-51.8622 1037.21 628.484)"/><ellipse cx="1287.47" cy="779.089" rx="23.1037" ry="13.6793" fill="#82704a" opacity="0.9" transform="rotate(5.12384 1287.47 779.089)"/><ellipse cx="1355.94" cy="650.256" rx="15.2328" ry="7.16145" fill="#82704a" opacity="0.9" transform="rotate(26.3488 1355.94 650.256)"/><ellipse cx="1289.73" cy="533.267" rx="25.0136" ry="12.0315" fill="#bcab82" opacity="0.9" transform="rotate(-33.5227 1289.73 533.267)"/><ellipse cx="1425.05" cy="556.163" rx="14.2312" ry="8.66426" fill="#45361a" opacity="0.9" transform="rotate(-22.5188 1425.05 556.163)"/><ellipse cx="1384.27" cy="782.132" rx="14.2858" ry="6.64462" fill="#65542f" opacity="0.9" transform="rotate(29.3351 1384.27 782.132)"/><ellipse cx="1669.21" cy="793.644" rx="16.7141" ry="8.70168" fill="#9a8960" opacity="0.9" transform="rotate(-26.3211 1669.21 793.644)"/><ellipse cx="1200.7" cy="738.828" rx="14.6394" ry="10.0317" fill="#9f8e64" opacity="0.9" transform="rotate(-32.1269 1200.7 738.828)"/><ellipse cx="1569.72" cy="803.08" rx="12.6651" ry="8.94887" fill="#65542f" opacity="0.9" transform="rotate(7.14688 1569.72 803.08)"/><ellipse cx="1115.2" cy="669.467" rx="12.4771" ry="8.4896" fill="#d2c49c" opacity="0.9" transform="rotate(21.0148 1115.2 669.467)"/><ellipse cx="1460.82" cy="656.437" rx="24.2196" ry="13.5079" fill="#9f8e64" opacity="0.9" transform="rotate(-39.8746 1460.82 656.437)"/><ellipse cx="1144.88" cy="593.456" rx="12.0554" ry="8.10838" fill="#a99870" opacity="0.9" transform="rotate(-13.3423 1144.88 593.456)"/><ellipse cx="1232.19" cy="538.869" rx="12.0771" ry="8.07845" fill="#45361a" opacity="0.9" transform="rotate(53.1796 1232.19 538.869)"/><ellipse cx="1293.75" cy="527.524" rx="20.6436" ry="15.5795" fill="#35280f" opacity="0.9" transform="rotate(23.8761 1293.75 527.524)"/><ellipse cx="1183.63" cy="599.089" rx="7.34447" ry="3.78147" fill="#ddd0ac" opacity="0.9" transform="rotate(-32.3349 1183.63 599.089)"/><ellipse cx="977.681" cy="658.412" rx="7.63141" ry="4.29829" fill="#75643f" opacity="0.9" transform="rotate(-65.1775 977.681 658.412)"/><ellipse cx="1627.97" cy="522.968" rx="15.2932" ry="8.92467" fill="#b5a47c" opacity="0.9" transform="rotate(-3.54989 1627.97 522.968)"/><ellipse cx="1347.05" cy="561.771" rx="18.0758" ry="8.70887" fill="#45361a" opacity="0.9" transform="rotate(44.3862 1347.05 561.771)"/><ellipse cx="1081.46" cy="701.166" rx="8.15183" ry="4.53638" fill="#97855c" opacity="0.9" transform="rotate(-37.4067 1081.46 701.166)"/><ellipse cx="1408.33" cy="655.91" rx="22.0087" ry="16.7812" fill="#bcab82" opacity="0.9" transform="rotate(39.7658 1408.33 655.91)"/><ellipse cx="1416.45" cy="729.982" rx="21.5308" ry="10.8152" fill="#35280f" opacity="0.9" transform="rotate(31.3818 1416.45 729.982)"/><ellipse cx="1450.98" cy="494.043" rx="23.3646" ry="15.6442" fill="#9f8e64" opacity="0.9" transform="rotate(32.7393 1450.98 494.043)"/><ellipse cx="1576.04" cy="503.578" rx="21.4276" ry="13.9058" fill="#857350" opacity="0.9" transform="rotate(43.8068 1576.04 503.578)"/><ellipse cx="986.899" cy="732.142" rx="11.3837" ry="7.84355" fill="#a99870" opacity="0.9" transform="rotate(27.0657 986.899 732.142)"/><ellipse cx="1145.16" cy="549.196" rx="6.06475" ry="4.76586" fill="#97855c" opacity="0.9" transform="rotate(-17.2734 1145.16 549.196)"/><ellipse cx="1309.03" cy="523.267" rx="10.3015" ry="7.08979" fill="#9f8e64" opacity="0.9" transform="rotate(-1.4988 1309.03 523.267)"/><ellipse cx="977.453" cy="758.371" rx="10.9861" ry="8.39615" fill="#75643f" opacity="0.9" transform="rotate(-57.1281 977.453 758.371)"/><ellipse cx="1364.23" cy="726.723" rx="17.5817" ry="8.36992" fill="#54442a" opacity="0.9" transform="rotate(-32.8218 1364.23 726.723)"/><ellipse cx="1514.71" cy="536.41" rx="25.3169" ry="15.7695" fill="#4d3d22" opacity="0.9" transform="rotate(-16.4415 1514.71 536.41)"/><ellipse cx="1329.47" cy="709.826" rx="22.2715" ry="14.9548" fill="#9f8e64" opacity="0.9" transform="rotate(-42.2394 1329.47 709.826)"/><ellipse cx="1418.78" cy="591.998" rx="20.4245" ry="11.3672" fill="#bcab82" opacity="0.9" transform="rotate(9.48664 1418.78 591.998)"/><ellipse cx="984.227" cy="587.219" rx="7.15018" ry="3.46663" fill="#a99870" opacity="0.9" transform="rotate(-39.5229 984.227 587.219)"/><ellipse cx="1337.31" cy="716.944" rx="14.5687" ry="8.9338" fill="#35280f" opacity="0.9" transform="rotate(-53.4096 1337.31 716.944)"/><ellipse cx="1636.31" cy="514.919" rx="29.6063" ry="13.5042" fill="#4d3d22" opacity="0.9" transform="rotate(-5.74408 1636.31 514.919)"/><ellipse cx="1581.72" cy="793.795" rx="20.0901" ry="11.7607" fill="#b5a47c" opacity="0.9" transform="rotate(58.3177 1581.72 793.795)"/><ellipse cx="1663.6" cy="464.717" rx="13.6255" ry="8.63068" fill="#6f5e3a" opacity="0.9" transform="rotate(63.3836 1663.6 464.717)"/><ellipse cx="1073.13" cy="760.122" rx="9.06995" ry="6.31421" fill="#d2c49c" opacity="0.9" transform="rotate(-37.6063 1073.13 760.122)"/><ellipse cx="1639.3" cy="618.541" rx="12.447" ry="9.73962" fill="#65542f" opacity="0.9" transform="rotate(25.4223 1639.3 618.541)"/><ellipse cx="1275.01" cy="725.882" rx="16.6589" ry="9.33943" fill="#35280f" opacity="0.9" transform="rotate(47.6323 1275.01 725.882)"/><ellipse cx="976.289" cy="747.605" rx="11.7129" ry="9.12385" fill="#d2c49c" opacity="0.9" transform="rotate(-42.5962 976.289 747.605)"/><ellipse cx="983.674" cy="744.728" rx="7.0257" ry="4.1277" fill="#d2c49c" opacity="0.9" transform="rotate(69.831 983.674 744.728)"/><ellipse cx="1410.99" cy="602.218" rx="16.8488" ry="12.6196" fill="#82704a" opacity="0.9" transform="rotate(-30.7107 1410.99 602.218)"/><ellipse cx="1013.2" cy="724.673" rx="10.0797" ry="5.41546" fill="#bfae84" opacity="0.9" transform="rotate(-32.7981 1013.2 724.673)"/><ellipse cx="1353.11" cy="557.4" rx="15.9736" ry="12.1318" fill="#35280f" opacity="0.9" transform="rotate(43.6747 1353.11 557.4)"/><ellipse cx="1441.86" cy="777.004" rx="25.0512" ry="13.0567" fill="#9f8e64" opacity="0.9" transform="rotate(-58.7192 1441.86 777.004)"/><ellipse cx="1665.76" cy="588.116" rx="23.0685" ry="15.5844" fill="#9a8960" opacity="0.9" transform="rotate(-29.9308 1665.76 588.116)"/><ellipse cx="1011.24" cy="787.628" rx="6.01849" ry="3.58223" fill="#ddd0ac" opacity="0.9" transform="rotate(-30.5556 1011.24 787.628)"/><ellipse cx="1164.25" cy="735.023" rx="10.2225" ry="6.94722" fill="#ddd0ac" opacity="0.9" transform="rotate(-27.8829 1164.25 735.023)"/><ellipse cx="1387.42" cy="615.75" rx="12.6773" ry="6.03833" fill="#65542f" opacity="0.9" transform="rotate(0.084671 1387.42 615.75)"/><ellipse cx="1575.75" cy="647.568" rx="20.1537" ry="16.0981" fill="#b5a47c" opacity="0.9" transform="rotate(-7.00554 1575.75 647.568)"/><ellipse cx="1078.3" cy="602.569" rx="5.72572" ry="3.69054" fill="#97855c" opacity="0.9" transform="rotate(-25.2997 1078.3 602.569)"/><ellipse cx="1247.55" cy="750.761" rx="13.2343" ry="9.42783" fill="#45361a" opacity="0.9" transform="rotate(-12.2106 1247.55 750.761)"/><ellipse cx="1281.27" cy="666.412" rx="16.0299" ry="11.4331" fill="#82704a" opacity="0.9" transform="rotate(-0.259575 1281.27 666.412)"/><ellipse cx="1399.97" cy="603.45" rx="20.9881" ry="14.0697" fill="#9f8e64" opacity="0.9" transform="rotate(50.8006 1399.97 603.45)"/><ellipse cx="1134.81" cy="614.035" rx="6.98763" ry="4.72383" fill="#ddd0ac" opacity="0.9" transform="rotate(-9.54286 1134.81 614.035)"/><ellipse cx="1205.89" cy="753.724" rx="25.4886" ry="11.7575" fill="#65542f" opacity="0.9" transform="rotate(29.3316 1205.89 753.724)"/><ellipse cx="1637.82" cy="614.027" rx="22.5692" ry="10.7339" fill="#65542f" opacity="0.9" transform="rotate(60.2334 1637.82 614.027)"/><ellipse cx="1661.84" cy="631.551" rx="20.4267" ry="10.9684" fill="#4d3d22" opacity="0.9" transform="rotate(-54.7336 1661.84 631.551)"/><ellipse cx="1089.24" cy="684.231" rx="10.4566" ry="7.27101" fill="#a99870" opacity="0.9" transform="rotate(48.5112 1089.24 684.231)"/><ellipse cx="1637.22" cy="473.366" rx="25.9835" ry="18.807" fill="#65542f" opacity="0.9" transform="rotate(-37.4392 1637.22 473.366)"/><ellipse cx="1655.74" cy="675.203" rx="17.4681" ry="11.6908" fill="#9a8960" opacity="0.9" transform="rotate(3.95544 1655.74 675.203)"/><ellipse cx="1298.7" cy="735.395" rx="11.5911" ry="7.34358" fill="#82704a" opacity="0.9" transform="rotate(11.6047 1298.7 735.395)"/><ellipse cx="1262.18" cy="581.83" rx="19.617" ry="12.5179" fill="#45361a" opacity="0.9" transform="rotate(69.4924 1262.18 581.83)"/><ellipse cx="1181.17" cy="619.573" rx="11.7153" ry="7.22079" fill="#bfae84" opacity="0.9" transform="rotate(-37.1325 1181.17 619.573)"/><ellipse cx="1157.82" cy="794.501" rx="10.6372" ry="4.99267" fill="#97855c" opacity="0.9" transform="rotate(-42.8239 1157.82 794.501)"/><ellipse cx="1629.79" cy="677.643" rx="13.4597" ry="9.20068" fill="#9a8960" opacity="0.9" transform="rotate(59.5225 1629.79 677.643)"/><ellipse cx="1142.82" cy="550.423" rx="7.70441" ry="4.444" fill="#ddd0ac" opacity="0.9" transform="rotate(-14.5099 1142.82 550.423)"/><ellipse cx="979.998" cy="641.478" rx="11.7612" ry="6.1373" fill="#d2c49c" opacity="0.9" transform="rotate(65.7802 979.998 641.478)"/><ellipse cx="1205.67" cy="755.297" rx="13.6929" ry="7.43195" fill="#65542f" opacity="0.9" transform="rotate(54.5067 1205.67 755.297)"/><ellipse cx="1055.67" cy="712.355" rx="9.88079" ry="6.1238" fill="#bfae84" opacity="0.9" transform="rotate(57.4554 1055.67 712.355)"/><ellipse cx="1016.75" cy="708.421" rx="12.3754" ry="6.49129" fill="#d2c49c" opacity="0.9" transform="rotate(66.3768 1016.75 708.421)"/><ellipse cx="1080.01" cy="567.009" rx="5.48108" ry="3.32907" fill="#ddd0ac" opacity="0.9" transform="rotate(29.6849 1080.01 567.009)"/><ellipse cx="1207.51" cy="559.8" rx="11.2698" ry="6.37007" fill="#65542f" opacity="0.9" transform="rotate(-44.0283 1207.51 559.8)"/><ellipse cx="1667.55" cy="711.512" rx="12.5741" ry="8.85067" fill="#6f5e3a" opacity="0.9" transform="rotate(47.4778 1667.55 711.512)"/><ellipse cx="1703.89" cy="595.48" rx="13.9612" ry="7.64981" fill="#65542f" opacity="0.9" transform="rotate(-20.7946 1703.89 595.48)"/><ellipse cx="1682.08" cy="479.531" rx="29.3569" ry="17.1164" fill="#9a8960" opacity="0.9" transform="rotate(37.6225 1682.08 479.531)"/><ellipse cx="1203.44" cy="750.948" rx="11.4042" ry="7.02169" fill="#bcab82" opacity="0.9" transform="rotate(-17.82 1203.44 750.948)"/><ellipse cx="1655.43" cy="509.577" rx="18.5565" ry="8.54709" fill="#4d3d22" opacity="0.9" transform="rotate(-12.4877 1655.43 509.577)"/><ellipse cx="1575.75" cy="723.299" rx="12.7317" ry="7.79711" fill="#65542f" opacity="0.9" transform="rotate(42.4673 1575.75 723.299)"/><ellipse cx="1020.88" cy="612.449" rx="5.50281" ry="3.12931" fill="#75643f" opacity="0.9" transform="rotate(-31.8759 1020.88 612.449)"/><ellipse cx="1683.69" cy="662.616" rx="16.7191" ry="11.5588" fill="#6f5e3a" opacity="0.9" transform="rotate(59.3919 1683.69 662.616)"/><ellipse cx="1195.08" cy="728.706" rx="19.5291" ry="13.1215" fill="#54442a" opacity="0.9" transform="rotate(62.055 1195.08 728.706)"/><ellipse cx="992.95" cy="626.039" rx="8.80151" ry="6.89923" fill="#ddd0ac" opacity="0.9" transform="rotate(-15.8879 992.95 626.039)"/><ellipse cx="1160.77" cy="652.705" rx="8.94779" ry="4.59942" fill="#ddd0ac" opacity="0.9" transform="rotate(42.3596 1160.77 652.705)"/><ellipse cx="1521.48" cy="744.862" rx="25.9106" ry="13.8013" fill="#857350" opacity="0.9" transform="rotate(50.5739 1521.48 744.862)"/><ellipse cx="1315.98" cy="740.54" rx="19.5315" ry="10.138" fill="#9f8e64" opacity="0.9" transform="rotate(35.404 1315.98 740.54)"/><ellipse cx="1158.01" cy="555.656" rx="5.27091" ry="3.37663" fill="#75643f" opacity="0.9" transform="rotate(-47.5031 1158.01 555.656)"/><ellipse cx="1290.65" cy="542.714" rx="11.1546" ry="5.34786" fill="#9f8e64" opacity="0.9" transform="rotate(-56.5008 1290.65 542.714)"/><ellipse cx="1343.87" cy="716.836" rx="17.1514" ry="8.51612" fill="#65542f" opacity="0.9" transform="rotate(-5.47067 1343.87 716.836)"/><ellipse cx="1634.53" cy="528.117" rx="21.6942" ry="15.5297" fill="#6f5e3a" opacity="0.9" transform="rotate(39.1651 1634.53 528.117)"/><ellipse cx="1192.5" cy="607.915" rx="14.2827" ry="10.1167" fill="#82704a" opacity="0.9" transform="rotate(-42.1134 1192.5 607.915)"/><ellipse cx="1158.1" cy="603.793" rx="6.22658" ry="3.21221" fill="#75643f" opacity="0.9" transform="rotate(-60.9274 1158.1 603.793)"/><ellipse cx="1161.22" cy="603.484" rx="9.21047" ry="6.75086" fill="#a99870" opacity="0.9" transform="rotate(21.4657 1161.22 603.484)"/><ellipse cx="1708.31" cy="466.883" rx="20.5457" ry="15.29" fill="#9a8960" opacity="0.9" transform="rotate(58.0126 1708.31 466.883)"/><ellipse cx="1004.87" cy="638.327" rx="5.95373" ry="3.93049" fill="#bfae84" opacity="0.9" transform="rotate(45.9095 1004.87 638.327)"/><ellipse cx="1118.68" cy="565.699" rx="9.10135" ry="5.52625" fill="#bfae84" opacity="0.9" transform="rotate(-33.6072 1118.68 565.699)"/><ellipse cx="1550.55" cy="786.261" rx="13.904" ry="9.71054" fill="#857350" opacity="0.9" transform="rotate(-21.0421 1550.55 786.261)"/><ellipse cx="1002.72" cy="649.545" rx="5.35333" ry="2.48064" fill="#97855c" opacity="0.9" transform="rotate(32.512 1002.72 649.545)"/><ellipse cx="1651.33" cy="737.332" rx="26.739" ry="18.3807" fill="#4d3d22" opacity="0.9" transform="rotate(-44.0797 1651.33 737.332)"/><ellipse cx="1206.02" cy="584.977" rx="22.7245" ry="14.0716" fill="#9f8e64" opacity="0.9" transform="rotate(-12.8562 1206.02 584.977)"/><ellipse cx="1563.92" cy="688.153" rx="14.7819" ry="7.12347" fill="#857350" opacity="0.9" transform="rotate(-47.0835 1563.92 688.153)"/><ellipse cx="1489.6" cy="608.507" rx="17.0994" ry="10.1955" fill="#b5a47c" opacity="0.9" transform="rotate(-62.8095 1489.6 608.507)"/><ellipse cx="1526.55" cy="765.42" rx="19.4534" ry="14.6384" fill="#65542f" opacity="0.9" transform="rotate(69.5268 1526.55 765.42)"/><ellipse cx="1244.2" cy="577.134" rx="21.6485" ry="16.8792" fill="#65542f" opacity="0.9" transform="rotate(-9.21701 1244.2 577.134)"/><ellipse cx="1090.86" cy="580.573" rx="5.7239" ry="4.3444" fill="#75643f" opacity="0.9" transform="rotate(-5.47313 1090.86 580.573)"/><ellipse cx="1095.28" cy="554.712" rx="9.41238" ry="6.89235" fill="#a99870" opacity="0.9" transform="rotate(-14.4593 1095.28 554.712)"/><ellipse cx="1398.92" cy="782.092" rx="21.796" ry="10.9211" fill="#65542f" opacity="0.9" transform="rotate(-30.3387 1398.92 782.092)"/><ellipse cx="1360.66" cy="782.119" rx="11.7407" ry="8.37985" fill="#35280f" opacity="0.9" transform="rotate(40.9003 1360.66 782.119)"/><ellipse cx="1570.49" cy="561.196" rx="27.0713" ry="21.4253" fill="#65542f" opacity="0.9" transform="rotate(-2.41689 1570.49 561.196)"/><ellipse cx="1014.5" cy="787.435" rx="8.10316" ry="5.40578" fill="#a99870" opacity="0.9" transform="rotate(45.4378 1014.5 787.435)"/><ellipse cx="1093.6" cy="750.659" rx="6.7766" ry="4.50749" fill="#ddd0ac" opacity="0.9" transform="rotate(-42.5442 1093.6 750.659)"/><ellipse cx="1324.99" cy="674.629" rx="10.6674" ry="5.38456" fill="#9f8e64" opacity="0.9" transform="rotate(-19.7109 1324.99 674.629)"/><ellipse cx="1085.61" cy="797.611" rx="11.5252" ry="5.35213" fill="#bfae84" opacity="0.9" transform="rotate(8.72806 1085.61 797.611)"/><ellipse cx="1535.52" cy="475.94" rx="27.0877" ry="15.8854" fill="#65542f" opacity="0.9" transform="rotate(-6.19731 1535.52 475.94)"/><ellipse cx="1603.27" cy="726.076" rx="23.6825" ry="15.4864" fill="#b5a47c" opacity="0.9" transform="rotate(-10.3964 1603.27 726.076)"/><ellipse cx="1462.54" cy="623.819" rx="17.0136" ry="7.67703" fill="#45361a" opacity="0.9" transform="rotate(68.0593 1462.54 623.819)"/><ellipse cx="1319.3" cy="639.676" rx="19.8972" ry="12.1453" fill="#54442a" opacity="0.9" transform="rotate(-44.8603 1319.3 639.676)"/><ellipse cx="1325.18" cy="537.09" rx="12.0553" ry="6.96635" fill="#35280f" opacity="0.9" transform="rotate(42.3195 1325.18 537.09)"/><ellipse cx="1348.21" cy="700.537" rx="10.6504" ry="5.09926" fill="#65542f" opacity="0.9" transform="rotate(32.6872 1348.21 700.537)"/><ellipse cx="1550.45" cy="636.417" rx="12.9768" ry="9.90392" fill="#857350" opacity="0.9" transform="rotate(21.3844 1550.45 636.417)"/><ellipse cx="1555.34" cy="467.88" rx="13.1949" ry="9.31859" fill="#857350" opacity="0.9" transform="rotate(44.0985 1555.34 467.88)"/><ellipse cx="1118.34" cy="800.274" rx="8.93496" ry="6.16643" fill="#bfae84" opacity="0.9" transform="rotate(30.9511 1118.34 800.274)"/><ellipse cx="1138.63" cy="761.134" rx="9.88356" ry="4.99682" fill="#97855c" opacity="0.9" transform="rotate(55.5152 1138.63 761.134)"/><ellipse cx="1178.49" cy="755.09" rx="6.14858" ry="4.8421" fill="#75643f" opacity="0.9" transform="rotate(-2.78494 1178.49 755.09)"/><ellipse cx="1413" cy="682.999" rx="13.7984" ry="6.38716" fill="#82704a" opacity="0.9" transform="rotate(-44.5065 1413 682.999)"/><ellipse cx="1094.31" cy="788.855" rx="10.4374" ry="5.31328" fill="#ddd0ac" opacity="0.9" transform="rotate(39.8817 1094.31 788.855)"/><ellipse cx="1060.16" cy="689.073" rx="10.0905" ry="7.95291" fill="#97855c" opacity="0.9" transform="rotate(-6.5746 1060.16 689.073)"/><ellipse cx="1360.87" cy="709.385" rx="24.3376" ry="19.4101" fill="#82704a" opacity="0.9" transform="rotate(18.1687 1360.87 709.385)"/><ellipse cx="1266.75" cy="746.658" rx="14.2361" ry="9.283" fill="#82704a" opacity="0.9" transform="rotate(-19.5648 1266.75 746.658)"/><ellipse cx="1540.83" cy="613.61" rx="15.1816" ry="11.922" fill="#6f5e3a" opacity="0.9" transform="rotate(-28.5063 1540.83 613.61)"/><ellipse cx="1356.92" cy="593.617" rx="25.4553" ry="16.6746" fill="#54442a" opacity="0.9" transform="rotate(22.9178 1356.92 593.617)"/><ellipse cx="1206.36" cy="529.223" rx="10.5407" ry="5.81678" fill="#65542f" opacity="0.9" transform="rotate(17.5865 1206.36 529.223)"/><ellipse cx="1284.09" cy="619.433" rx="10.7644" ry="5.7002" fill="#35280f" opacity="0.9" transform="rotate(21.4352 1284.09 619.433)"/><ellipse cx="991.494" cy="572.311" rx="7.8397" ry="4.96317" fill="#d2c49c" opacity="0.9" transform="rotate(4.77584 991.494 572.311)"/><ellipse cx="1280.8" cy="601.525" rx="12.1396" ry="8.11383" fill="#82704a" opacity="0.9" transform="rotate(-3.51375 1280.8 601.525)"/><ellipse cx="1074.71" cy="789.151" rx="6.94871" ry="4.22341" fill="#bfae84" opacity="0.9" transform="rotate(-61.0864 1074.71 789.151)"/><ellipse cx="1082.07" cy="720.895" rx="7.15808" ry="5.64413" fill="#97855c" opacity="0.9" transform="rotate(-62.1417 1082.07 720.895)"/><ellipse cx="1582.45" cy="767.277" rx="22.705" ry="13.7437" fill="#857350" opacity="0.9" transform="rotate(61.202 1582.45 767.277)"/><ellipse cx="1517.81" cy="550.57" rx="28.2631" ry="13.327" fill="#65542f" opacity="0.9" transform="rotate(-66.4685 1517.81 550.57)"/><ellipse cx="1112.39" cy="588.517" rx="12.2939" ry="5.58541" fill="#d2c49c" opacity="0.9" transform="rotate(7.12921 1112.39 588.517)"/><ellipse cx="1671.28" cy="488.277" rx="15.5913" ry="10.5233" fill="#857350" opacity="0.9" transform="rotate(20.6635 1671.28 488.277)"/><ellipse cx="1282.28" cy="692.26" rx="18.1372" ry="10.0678" fill="#45361a" opacity="0.9" transform="rotate(-63.2113 1282.28 692.26)"/><ellipse cx="1633.12" cy="726.518" rx="24.8772" ry="14.4612" fill="#65542f" opacity="0.9" transform="rotate(-8.86935 1633.12 726.518)"/><ellipse cx="1650.07" cy="469.361" rx="23.7996" ry="12.5919" fill="#9a8960" opacity="0.9" transform="rotate(-55.2606 1650.07 469.361)"/><ellipse cx="1146.9" cy="550.883" rx="7.68413" ry="5.94607" fill="#a99870" opacity="0.9" transform="rotate(61.9991 1146.9 550.883)"/><ellipse cx="1169.84" cy="550.161" rx="10.0869" ry="6.07857" fill="#a99870" opacity="0.9" transform="rotate(40.383 1169.84 550.161)"/><ellipse cx="1362.2" cy="579.123" rx="20.2721" ry="9.7285" fill="#65542f" opacity="0.9" transform="rotate(1.04 1362.2 579.123)"/><ellipse cx="1100.63" cy="780.687" rx="11.7338" ry="9.15991" fill="#bfae84" opacity="0.9" transform="rotate(34.4612 1100.63 780.687)"/><ellipse cx="1216.88" cy="771.641" rx="15.2569" ry="8.89181" fill="#65542f" opacity="0.9" transform="rotate(49.2699 1216.88 771.641)"/><ellipse cx="1657.04" cy="798.28" rx="27.1474" ry="16.6772" fill="#857350" opacity="0.9" transform="rotate(47.5596 1657.04 798.28)"/><ellipse cx="1491.24" cy="757.52" rx="19.8699" ry="10.5676" fill="#6f5e3a" opacity="0.9" transform="rotate(53.8662 1491.24 757.52)"/><ellipse cx="1559.01" cy="593.993" rx="22.536" ry="17.3251" fill="#857350" opacity="0.9" transform="rotate(-49.7567 1559.01 593.993)"/><ellipse cx="994.908" cy="595.979" rx="12.4316" ry="9.84697" fill="#97855c" opacity="0.9" transform="rotate(28.1036 994.908 595.979)"/><ellipse cx="997.844" cy="602.896" rx="10.1484" ry="7.04248" fill="#d2c49c" opacity="0.9" transform="rotate(33.1499 997.844 602.896)"/><ellipse cx="1023.67" cy="706.823" rx="7.90725" ry="6.02491" fill="#75643f" opacity="0.9" transform="rotate(-60.7672 1023.67 706.823)"/><ellipse cx="1617.17" cy="774.321" rx="28.9979" ry="15.5516" fill="#65542f" opacity="0.9" transform="rotate(-41.5575 1617.17 774.321)"/><ellipse cx="1000.06" cy="793.074" rx="12.2889" ry="5.90622" fill="#a99870" opacity="0.9" transform="rotate(35.1997 1000.06 793.074)"/><ellipse cx="1442.87" cy="635.808" rx="12.1225" ry="8.6685" fill="#54442a" opacity="0.9" transform="rotate(-41.3009 1442.87 635.808)"/><ellipse cx="1211.16" cy="645.249" rx="10.3347" ry="8.01491" fill="#82704a" opacity="0.9" transform="rotate(-63.2229 1211.16 645.249)"/><ellipse cx="1537.29" cy="774.293" rx="25.8463" ry="16.1877" fill="#857350" opacity="0.9" transform="rotate(49.1928 1537.29 774.293)"/><ellipse cx="1432.52" cy="493.456" rx="16.6067" ry="10.4874" fill="#35280f" opacity="0.9" transform="rotate(-56.2381 1432.52 493.456)"/><ellipse cx="1322.02" cy="520.003" rx="19.0576" ry="14.3272" fill="#bcab82" opacity="0.9" transform="rotate(-57.2755 1322.02 520.003)"/><ellipse cx="1581.66" cy="513.525" rx="12.0234" ry="6.62389" fill="#9a8960" opacity="0.9" transform="rotate(35.0726 1581.66 513.525)"/><ellipse cx="1014.93" cy="649.786" rx="5.76551" ry="4.20231" fill="#a99870" opacity="0.9" transform="rotate(-44.1673 1014.93 649.786)"/><ellipse cx="1340.99" cy="607.068" rx="23.3094" ry="15.2048" fill="#82704a" opacity="0.9" transform="rotate(-47.7546 1340.99 607.068)"/><ellipse cx="1578.28" cy="783.361" rx="16.1675" ry="7.89739" fill="#9a8960" opacity="0.9" transform="rotate(19.1144 1578.28 783.361)"/><ellipse cx="1034.85" cy="753.681" rx="10.5773" ry="7.0844" fill="#d2c49c" opacity="0.9" transform="rotate(-20.2136 1034.85 753.681)"/><ellipse cx="1271.94" cy="629.804" rx="24.2465" ry="14.4932" fill="#45361a" opacity="0.9" transform="rotate(20.4208 1271.94 629.804)"/><ellipse cx="1250.24" cy="606.361" rx="16.849" ry="10.5376" fill="#9f8e64" opacity="0.9" transform="rotate(-16.8973 1250.24 606.361)"/><ellipse cx="1629.14" cy="528.452" rx="20.2963" ry="13.3536" fill="#857350" opacity="0.9" transform="rotate(26.4929 1629.14 528.452)"/><ellipse cx="1422.96" cy="496.237" rx="19.3053" ry="9.7369" fill="#9f8e64" opacity="0.9" transform="rotate(48.0349 1422.96 496.237)"/><ellipse cx="1464.95" cy="720.374" rx="12.7128" ry="8.78673" fill="#35280f" opacity="0.9" transform="rotate(-33.9902 1464.95 720.374)"/><ellipse cx="1145.96" cy="629.063" rx="10.1416" ry="5.40831" fill="#a99870" opacity="0.9" transform="rotate(-43.1797 1145.96 629.063)"/><ellipse cx="1198.12" cy="723.483" rx="23.4986" ry="16.5235" fill="#65542f" opacity="0.9" transform="rotate(66.4674 1198.12 723.483)"/><ellipse cx="1510.14" cy="671.165" rx="18.2754" ry="10.3224" fill="#9a8960" opacity="0.9" transform="rotate(-43.5017 1510.14 671.165)"/><ellipse cx="1696.61" cy="703.459" rx="13.8325" ry="6.7167" fill="#6f5e3a" opacity="0.9" transform="rotate(-16.2074 1696.61 703.459)"/><ellipse cx="1703.04" cy="727.958" rx="25.1993" ry="13.7547" fill="#4d3d22" opacity="0.9" transform="rotate(-54.7009 1703.04 727.958)"/><ellipse cx="1649.44" cy="542.574" rx="27.9345" ry="12.9023" fill="#4d3d22" opacity="0.9" transform="rotate(-14.137 1649.44 542.574)"/><ellipse cx="1560.34" cy="698.602" rx="21.0088" ry="11.632" fill="#6f5e3a" opacity="0.9" transform="rotate(-66.9036 1560.34 698.602)"/><ellipse cx="1165.34" cy="734.831" rx="5.04414" ry="3.8729" fill="#bfae84" opacity="0.9" transform="rotate(-9.79603 1165.34 734.831)"/><ellipse cx="1399.74" cy="725.979" rx="16.7385" ry="11.4452" fill="#65542f" opacity="0.9" transform="rotate(21.3479 1399.74 725.979)"/><ellipse cx="1624.43" cy="676.05" rx="22.5077" ry="15.4821" fill="#9a8960" opacity="0.9" transform="rotate(19.8154 1624.43 676.05)"/><ellipse cx="1310.89" cy="600.843" rx="20.0524" ry="15.3032" fill="#45361a" opacity="0.9" transform="rotate(-36.0645 1310.89 600.843)"/><ellipse cx="1271.1" cy="721.889" rx="12.5033" ry="7.48016" fill="#54442a" opacity="0.9" transform="rotate(-6.27277 1271.1 721.889)"/><ellipse cx="1434.96" cy="614.814" rx="20.8039" ry="10.6947" fill="#54442a" opacity="0.9" transform="rotate(21.6286 1434.96 614.814)"/><ellipse cx="1550.85" cy="594" rx="20.8171" ry="9.64563" fill="#65542f" opacity="0.9" transform="rotate(6.07039 1550.85 594)"/><ellipse cx="1094.02" cy="749.618" rx="12.5247" ry="7.16253" fill="#75643f" opacity="0.9" transform="rotate(48.6023 1094.02 749.618)"/><ellipse cx="1313.02" cy="568.399" rx="17.6118" ry="11.8658" fill="#45361a" opacity="0.9" transform="rotate(46.0579 1313.02 568.399)"/><ellipse cx="1361.05" cy="623.853" rx="25.1676" ry="20.0484" fill="#65542f" opacity="0.9" transform="rotate(-44.2676 1361.05 623.853)"/><ellipse cx="1355.21" cy="784.401" rx="21.6657" ry="12.4451" fill="#9f8e64" opacity="0.9" transform="rotate(-62.0734 1355.21 784.401)"/><ellipse cx="1178.02" cy="642.552" rx="5.10647" ry="3.93403" fill="#ddd0ac" opacity="0.9" transform="rotate(17.9991 1178.02 642.552)"/><ellipse cx="1474.41" cy="666.507" rx="13.9667" ry="9.90955" fill="#b5a47c" opacity="0.9" transform="rotate(61.5904 1474.41 666.507)"/><ellipse cx="1365.04" cy="564.42" rx="22.8238" ry="13.9622" fill="#35280f" opacity="0.9" transform="rotate(-46.9653 1365.04 564.42)"/><ellipse cx="1662.77" cy="462.769" rx="26.3711" ry="16.1973" fill="#9a8960" opacity="0.9" transform="rotate(8.68755 1662.77 462.769)"/><ellipse cx="1142.23" cy="795.48" rx="7.82505" ry="5.79637" fill="#a99870" opacity="0.9" transform="rotate(41.336 1142.23 795.48)"/><ellipse cx="1280.83" cy="803.876" rx="22.1582" ry="10.9419" fill="#bcab82" opacity="0.9" transform="rotate(46.7242 1280.83 803.876)"/><ellipse cx="1237.51" cy="762.814" rx="14.2788" ry="9.86105" fill="#35280f" opacity="0.9" transform="rotate(67.6047 1237.51 762.814)"/><ellipse cx="1477.33" cy="633.677" rx="26.4979" ry="15.244" fill="#b5a47c" opacity="0.9" transform="rotate(21.6164 1477.33 633.677)"/><ellipse cx="1212.04" cy="662.113" rx="19.9738" ry="13.597" fill="#45361a" opacity="0.9" transform="rotate(-19.2596 1212.04 662.113)"/><ellipse cx="1662.26" cy="751.516" rx="13.0271" ry="9.99223" fill="#857350" opacity="0.9" transform="rotate(39.7654 1662.26 751.516)"/><ellipse cx="1078.9" cy="762.701" rx="10.0653" ry="6.84497" fill="#d2c49c" opacity="0.9" transform="rotate(-40.6351 1078.9 762.701)"/><ellipse cx="1028.28" cy="634.854" rx="9.8656" ry="4.93237" fill="#75643f" opacity="0.9" transform="rotate(-37.2902 1028.28 634.854)"/><ellipse cx="1549.47" cy="579.593" rx="14.7481" ry="10.7231" fill="#4d3d22" opacity="0.9" transform="rotate(-46.4922 1549.47 579.593)"/><ellipse cx="1634.44" cy="663.273" rx="26.0631" ry="19.9532" fill="#6f5e3a" opacity="0.9" transform="rotate(6.79014 1634.44 663.273)"/><ellipse cx="1446.08" cy="577.09" rx="17.9114" ry="11.3877" fill="#65542f" opacity="0.9" transform="rotate(33.8677 1446.08 577.09)"/><ellipse cx="1299.55" cy="770.402" rx="18.881" ry="11.2656" fill="#82704a" opacity="0.9" transform="rotate(45.7875 1299.55 770.402)"/><ellipse cx="1325.2" cy="672.143" rx="17.7499" ry="12.3388" fill="#65542f" opacity="0.9" transform="rotate(-35.4807 1325.2 672.143)"/><ellipse cx="1096.82" cy="703.153" rx="10.8767" ry="8.0952" fill="#bfae84" opacity="0.9" transform="rotate(-4.48554 1096.82 703.153)"/><ellipse cx="1391.3" cy="700.152" rx="23.4491" ry="14.0468" fill="#82704a" opacity="0.9" transform="rotate(69.9931 1391.3 700.152)"/><ellipse cx="1475.2" cy="534.538" rx="18.4868" ry="8.50364" fill="#6f5e3a" opacity="0.9" transform="rotate(15.3545 1475.2 534.538)"/><ellipse cx="1480.12" cy="782.323" rx="17.9482" ry="11.2844" fill="#65542f" opacity="0.9" transform="rotate(-2.14542 1480.12 782.323)"/><ellipse cx="1639.2" cy="454.46" rx="24.9273" ry="12.3245" fill="#6f5e3a" opacity="0.9" transform="rotate(-56.7749 1639.2 454.46)"/><ellipse cx="1462.68" cy="589.256" rx="22.4564" ry="16.1619" fill="#9f8e64" opacity="0.9" transform="rotate(-40.4985 1462.68 589.256)"/><ellipse cx="1297.04" cy="634.947" rx="18.8644" ry="10.3981" fill="#54442a" opacity="0.9" transform="rotate(-20.275 1297.04 634.947)"/><ellipse cx="1340.36" cy="603.07" rx="25.7486" ry="16.1508" fill="#54442a" opacity="0.9" transform="rotate(66.4994 1340.36 603.07)"/><ellipse cx="1459.37" cy="736.994" rx="15.2943" ry="10.7001" fill="#82704a" opacity="0.9" transform="rotate(-52.1401 1459.37 736.994)"/><ellipse cx="1694.83" cy="463.784" rx="29.9369" ry="21.0438" fill="#4d3d22" opacity="0.9" transform="rotate(53.9842 1694.83 463.784)"/><ellipse cx="1378.6" cy="509.723" rx="14.8065" ry="6.90337" fill="#45361a" opacity="0.9" transform="rotate(45.0746 1378.6 509.723)"/><ellipse cx="1326.54" cy="734.723" rx="10.9624" ry="8.42391" fill="#9f8e64" opacity="0.9" transform="rotate(15.6436 1326.54 734.723)"/><ellipse cx="1431.36" cy="685.106" rx="21.1425" ry="15.9988" fill="#9f8e64" opacity="0.9" transform="rotate(-58.3796 1431.36 685.106)"/><ellipse cx="1004.21" cy="718.585" rx="10.0022" ry="4.85584" fill="#bfae84" opacity="0.9" transform="rotate(-44.6183 1004.21 718.585)"/><ellipse cx="1002.36" cy="751.909" rx="12.3127" ry="5.59856" fill="#a99870" opacity="0.9" transform="rotate(52.0691 1002.36 751.909)"/><ellipse cx="1077.63" cy="631.973" rx="10.6811" ry="5.49724" fill="#97855c" opacity="0.9" transform="rotate(-65.2063 1077.63 631.973)"/><ellipse cx="990.09" cy="703.948" rx="9.62623" ry="6.00886" fill="#d2c49c" opacity="0.9" transform="rotate(3.10156 990.09 703.948)"/><ellipse cx="1585.32" cy="725.355" rx="19.5793" ry="15.1058" fill="#6f5e3a" opacity="0.9" transform="rotate(-7.49396 1585.32 725.355)"/><ellipse cx="985.457" cy="662.761" rx="9.73577" ry="7.72314" fill="#a99870" opacity="0.9" transform="rotate(-3.43722 985.457 662.761)"/><ellipse cx="1280.19" cy="543.661" rx="20.3121" ry="15.5087" fill="#65542f" opacity="0.9" transform="rotate(17.7653 1280.19 543.661)"/><ellipse cx="1290.98" cy="514.539" rx="20.7099" ry="9.95831" fill="#54442a" opacity="0.9" transform="rotate(51.7369 1290.98 514.539)"/><ellipse cx="1070.44" cy="560.341" rx="10.7548" ry="6.53647" fill="#bfae84" opacity="0.9" transform="rotate(34.189 1070.44 560.341)"/><ellipse cx="1657.87" cy="572.545" rx="25.4504" ry="19.0731" fill="#6f5e3a" opacity="0.9" transform="rotate(32.161 1657.87 572.545)"/><ellipse cx="1037.37" cy="714.95" rx="10.6739" ry="7.30456" fill="#ddd0ac" opacity="0.9" transform="rotate(54.601 1037.37 714.95)"/><ellipse cx="1651.01" cy="459.031" rx="12.5754" ry="5.72378" fill="#65542f" opacity="0.9" transform="rotate(21.0976 1651.01 459.031)"/><ellipse cx="1579.83" cy="481.998" rx="17.5991" ry="11.6162" fill="#6f5e3a" opacity="0.9" transform="rotate(64.0779 1579.83 481.998)"/><ellipse cx="1592.84" cy="666.737" rx="17.693" ry="12.4686" fill="#857350" opacity="0.9" transform="rotate(-4.22771 1592.84 666.737)"/><ellipse cx="1098.19" cy="796.433" rx="5.93364" ry="3.01078" fill="#a99870" opacity="0.9" transform="rotate(42.2588 1098.19 796.433)"/><ellipse cx="1327.95" cy="738.297" rx="17.2441" ry="12.4954" fill="#82704a" opacity="0.9" transform="rotate(9.35432 1327.95 738.297)"/><ellipse cx="1191.37" cy="548.297" rx="25.5832" ry="18.6931" fill="#bcab82" opacity="0.9" transform="rotate(13.9864 1191.37 548.297)"/><ellipse cx="1618.47" cy="706.613" rx="12.279" ry="8.10903" fill="#9a8960" opacity="0.9" transform="rotate(-26.7963 1618.47 706.613)"/><ellipse cx="1292.14" cy="772.173" rx="16.0268" ry="9.32233" fill="#bcab82" opacity="0.9" transform="rotate(38.0024 1292.14 772.173)"/><ellipse cx="1148.42" cy="659.76" rx="10.5084" ry="5.69626" fill="#97855c" opacity="0.9" transform="rotate(-10.85 1148.42 659.76)"/><ellipse cx="1409.12" cy="746.7" rx="24.199" ry="13.3332" fill="#45361a" opacity="0.9" transform="rotate(-50.3062 1409.12 746.7)"/><ellipse cx="1634.05" cy="802.408" rx="14.646" ry="10.1002" fill="#857350" opacity="0.9" transform="rotate(57.9249 1634.05 802.408)"/><ellipse cx="1231.67" cy="547.597" rx="18.8588" ry="11.0061" fill="#54442a" opacity="0.9" transform="rotate(40.2766 1231.67 547.597)"/><ellipse cx="1509.42" cy="799.029" rx="17.5705" ry="12.0741" fill="#65542f" opacity="0.9" transform="rotate(-4.85479 1509.42 799.029)"/><ellipse cx="1127.87" cy="610.803" rx="11.0091" ry="6.72545" fill="#ddd0ac" opacity="0.9" transform="rotate(-57.7219 1127.87 610.803)"/><ellipse cx="1571.87" cy="725.401" rx="16.1916" ry="10.239" fill="#857350" opacity="0.9" transform="rotate(-33.6642 1571.87 725.401)"/><ellipse cx="1591.66" cy="565.085" rx="21.111" ry="10.8976" fill="#9a8960" opacity="0.9" transform="rotate(-43.076 1591.66 565.085)"/><ellipse cx="1108.71" cy="728.25" rx="7.90261" ry="4.54883" fill="#75643f" opacity="0.9" transform="rotate(39.1494 1108.71 728.25)"/><ellipse cx="1609.14" cy="536.06" rx="28.6071" ry="16.6183" fill="#4d3d22" opacity="0.9" transform="rotate(-55.1434 1609.14 536.06)"/><ellipse cx="1443.23" cy="736.176" rx="12.4985" ry="5.75712" fill="#9f8e64" opacity="0.9" transform="rotate(-30.7233 1443.23 736.176)"/><ellipse cx="1424.28" cy="515.237" rx="13.2743" ry="9.99726" fill="#54442a" opacity="0.9" transform="rotate(-1.91583 1424.28 515.237)"/><ellipse cx="1394.72" cy="573.183" rx="22.4671" ry="10.8738" fill="#35280f" opacity="0.9" transform="rotate(-7.43935 1394.72 573.183)"/><ellipse cx="1413.91" cy="680.659" rx="12.0945" ry="5.60282" fill="#54442a" opacity="0.9" transform="rotate(-41.8615 1413.91 680.659)"/><ellipse cx="1108.74" cy="569.73" rx="5.40798" ry="3.13323" fill="#75643f" opacity="0.9" transform="rotate(28.7798 1108.74 569.73)"/><ellipse cx="1335.26" cy="758.365" rx="24.3168" ry="16.0327" fill="#54442a" opacity="0.9" transform="rotate(-14.3645 1335.26 758.365)"/><ellipse cx="1063.74" cy="794.916" rx="7.05755" ry="3.75195" fill="#75643f" opacity="0.9" transform="rotate(-57.4303 1063.74 794.916)"/><ellipse cx="1656.46" cy="624.236" rx="15.2881" ry="8.86431" fill="#9a8960" opacity="0.9" transform="rotate(-37.082 1656.46 624.236)"/><ellipse cx="1508.33" cy="526.283" rx="28.9508" ry="13.6285" fill="#b5a47c" opacity="0.9" transform="rotate(7.39689 1508.33 526.283)"/><ellipse cx="995.562" cy="786.063" rx="7.06323" ry="4.93269" fill="#75643f" opacity="0.9" transform="rotate(20.5361 995.562 786.063)"/><ellipse cx="1704.22" cy="450.117" rx="14.6064" ry="11.3752" fill="#65542f" opacity="0.9" transform="rotate(24.7645 1704.22 450.117)"/><ellipse cx="1196.11" cy="692.971" rx="22.1264" ry="13.6023" fill="#45361a" opacity="0.9" transform="rotate(-17.9637 1196.11 692.971)"/><ellipse cx="1263.64" cy="625.166" rx="16.0743" ry="8.57502" fill="#35280f" opacity="0.9" transform="rotate(-49.9591 1263.64 625.166)"/><ellipse cx="1476.46" cy="478.875" rx="24.9101" ry="18.1743" fill="#9a8960" opacity="0.9" transform="rotate(-48.0261 1476.46 478.875)"/><ellipse cx="1591.3" cy="479.219" rx="23.1358" ry="17.6074" fill="#b5a47c" opacity="0.9" transform="rotate(-50.4332 1591.3 479.219)"/><ellipse cx="1305.96" cy="537.535" rx="24.8605" ry="11.3763" fill="#54442a" opacity="0.9" transform="rotate(-59.4784 1305.96 537.535)"/><ellipse cx="1694.51" cy="551.706" rx="16.2099" ry="10.8584" fill="#65542f" opacity="0.9" transform="rotate(-50.0125 1694.51 551.706)"/><ellipse cx="1139.02" cy="557.104" rx="10.7098" ry="8.15295" fill="#75643f" opacity="0.9" transform="rotate(-8.54406 1139.02 557.104)"/><ellipse cx="1085.55" cy="658.338" rx="6.97406" ry="3.80008" fill="#d2c49c" opacity="0.9" transform="rotate(47.5389 1085.55 658.338)"/><ellipse cx="1222.54" cy="572.393" rx="17.8561" ry="10.8862" fill="#82704a" opacity="0.9" transform="rotate(-2.45892 1222.54 572.393)"/><ellipse cx="1088.49" cy="682.051" rx="10.048" ry="7.77545" fill="#a99870" opacity="0.9" transform="rotate(8.39195 1088.49 682.051)"/><ellipse cx="1593.11" cy="493.526" rx="25.5873" ry="15.3836" fill="#b5a47c" opacity="0.9" transform="rotate(-33.3868 1593.11 493.526)"/><ellipse cx="1151.62" cy="602.862" rx="8.12116" ry="6.20189" fill="#ddd0ac" opacity="0.9" transform="rotate(-61.9525 1151.62 602.862)"/></g>
<g filter="url(#pb3)"><path d="M1336.77,555.122 L1357.33,540.987 L1388.17,552.552 L1365.04,567.973 Z" fill="#3d2f14" opacity="0.95"/><path d="M1252.32,617.26 L1267.64,606.727 L1290.63,615.345 L1273.39,626.835 Z" fill="#94835a" opacity="0.95"/><path d="M1111.24,711.351 L1126.74,700.696 L1149.99,709.414 L1132.55,721.037 Z" fill="#5d4c28" opacity="0.95"/><path d="M1227.51,481.759 L1241.69,472.01 L1262.96,479.986 L1247,490.621 Z" fill="#7a6842" opacity="0.95"/><path d="M1298.31,510.042 L1309.92,502.055 L1327.35,508.589 L1314.28,517.303 Z" fill="#5d4c28" opacity="0.95"/><path d="M1344.61,527.046 L1355.1,519.836 L1370.83,525.735 L1359.03,533.601 Z" fill="#3d2f14" opacity="0.95"/><path d="M1391.93,681.946 L1410.05,669.484 L1437.24,679.681 L1416.85,693.275 Z" fill="#5d4c28" opacity="0.95"/><path d="M1174.02,647.606 L1191.55,635.556 L1217.84,645.415 L1198.12,658.56 Z" fill="#5d4c28" opacity="0.95"/><path d="M1303.62,528.664 L1313.95,521.558 L1329.46,527.372 L1317.83,535.124 Z" fill="#2f230c" opacity="0.95"/><path d="M1271.43,713.91 L1291.29,700.255 L1321.09,711.427 L1298.74,726.323 Z" fill="#b3a278" opacity="0.95"/><path d="M1365.62,567.214 L1384.65,554.131 L1413.19,564.835 L1391.79,579.107 Z" fill="#94835a" opacity="0.95"/><path d="M1136.22,588.76 L1154.37,576.285 L1181.59,586.492 L1161.17,600.101 Z" fill="#5d4c28" opacity="0.95"/><path d="M1394.44,547.215 L1406.12,539.183 L1423.65,545.755 L1410.5,554.518 Z" fill="#7a6842" opacity="0.95"/><path d="M1121.69,673.655 L1137.72,662.628 L1161.78,671.65 L1143.74,683.679 Z" fill="#3d2f14" opacity="0.95"/><path d="M1218.41,740.314 L1238.86,726.255 L1269.53,737.758 L1246.53,753.096 Z" fill="#3d2f14" opacity="0.95"/><path d="M1145.22,677.231 L1163.96,664.344 L1192.08,674.888 L1170.99,688.947 Z" fill="#7a6842" opacity="0.95"/><path d="M1359.25,721.747 L1375.31,710.709 L1399.39,719.74 L1381.33,731.781 Z" fill="#3d2f14" opacity="0.95"/><path d="M1201.06,501.23 L1218.85,489.001 L1245.53,499.006 L1225.52,512.346 Z" fill="#94835a" opacity="0.95"/><path d="M1274.74,623.848 L1290.36,613.111 L1313.78,621.896 L1296.21,633.609 Z" fill="#3d2f14" opacity="0.95"/><path d="M1187.26,495.69 L1203.8,484.323 L1228.6,493.623 L1210,506.024 Z" fill="#5d4c28" opacity="0.95"/><path d="M1139.42,542.633 L1158.17,529.741 L1186.3,540.289 L1165.2,554.353 Z" fill="#3d2f14" opacity="0.95"/><path d="M1113.88,738.63 L1131.76,726.342 L1158.57,736.396 L1138.46,749.802 Z" fill="#7a6842" opacity="0.95"/><path d="M1115.59,643.825 L1131.65,632.787 L1155.73,641.818 L1137.67,653.861 Z" fill="#b3a278" opacity="0.95"/><path d="M1189.37,598.822 L1202.9,589.521 L1223.19,597.131 L1207.97,607.276 Z" fill="#3d2f14" opacity="0.95"/><path d="M1345.75,483.099 L1356.73,475.552 L1373.19,481.727 L1360.84,489.961 Z" fill="#94835a" opacity="0.95"/><path d="M1303.95,690.838 L1314.78,683.391 L1331.03,689.484 L1318.84,697.609 Z" fill="#3d2f14" opacity="0.95"/><path d="M1239.52,509.717 L1255.75,498.56 L1280.09,507.688 L1261.84,519.86 Z" fill="#5d4c28" opacity="0.95"/><path d="M1154.66,636.124 L1172.62,623.775 L1199.56,633.879 L1179.36,647.35 Z" fill="#5d4c28" opacity="0.95"/><path d="M1412.53,475.368 L1429.24,463.878 L1454.31,473.279 L1435.51,485.812 Z" fill="#2f230c" opacity="0.95"/><path d="M1245.2,713.52 L1260.68,702.872 L1283.91,711.584 L1266.49,723.199 Z" fill="#94835a" opacity="0.95"/><path d="M1423.47,485.07 L1437.14,475.673 L1457.64,483.362 L1442.27,493.613 Z" fill="#94835a" opacity="0.95"/><path d="M1188.82,567.174 L1203.3,557.22 L1225.02,565.364 L1208.73,576.223 Z" fill="#b3a278" opacity="0.95"/><path d="M1363.99,734.704 L1382.72,721.828 L1410.81,732.362 L1389.74,746.409 Z" fill="#b3a278" opacity="0.95"/><path d="M1121.73,620.039 L1142.06,606.063 L1172.55,617.498 L1149.68,632.744 Z" fill="#7a6842" opacity="0.95"/><path d="M1188.91,592.419 L1205.6,580.948 L1230.63,590.334 L1211.86,602.848 Z" fill="#7a6842" opacity="0.95"/><path d="M1148.35,524.374 L1161.58,515.276 L1181.43,522.72 L1166.54,532.644 Z" fill="#5d4c28" opacity="0.95"/><path d="M1277.58,476.04 L1288.74,468.367 L1305.48,474.645 L1292.92,483.016 Z" fill="#94835a" opacity="0.95"/><path d="M1357.64,741.711 L1374.33,730.235 L1399.37,739.625 L1380.59,752.144 Z" fill="#3d2f14" opacity="0.95"/><path d="M1125.28,656.057 L1137.86,647.41 L1156.72,654.484 L1142.57,663.917 Z" fill="#2f230c" opacity="0.95"/><path d="M1306.22,652.192 L1324.85,639.384 L1352.8,649.863 L1331.84,663.837 Z" fill="#3d2f14" opacity="0.95"/><path d="M1309.52,542.669 L1324.95,532.062 L1348.09,540.74 L1330.73,552.311 Z" fill="#94835a" opacity="0.95"/><path d="M1192.15,481.431 L1203.01,473.961 L1219.31,480.073 L1207.09,488.223 Z" fill="#7a6842" opacity="0.95"/><path d="M1316.89,504.911 L1333.14,493.735 L1357.53,502.879 L1339.24,515.071 Z" fill="#b3a278" opacity="0.95"/><path d="M1398.19,494.497 L1414.4,483.353 L1438.72,492.471 L1420.48,504.629 Z" fill="#5d4c28" opacity="0.95"/><path d="M1246.4,618.373 L1265.91,604.957 L1295.19,615.934 L1273.23,630.57 Z" fill="#94835a" opacity="0.95"/><path d="M1292.45,549.492 L1310.29,537.226 L1337.05,547.262 L1316.98,560.644 Z" fill="#2f230c" opacity="0.95"/><path d="M1284.28,713.527 L1300.71,702.23 L1325.36,711.473 L1306.87,723.796 Z" fill="#b3a278" opacity="0.95"/><path d="M1181.24,582.129 L1196.98,571.305 L1220.6,580.161 L1202.89,591.969 Z" fill="#7a6842" opacity="0.95"/><path d="M1256.9,628.929 L1273.37,617.61 L1298.06,626.871 L1279.54,639.218 Z" fill="#94835a" opacity="0.95"/><path d="M1375.35,478.979 L1388.69,469.81 L1408.69,477.312 L1393.69,487.315 Z" fill="#5d4c28" opacity="0.95"/><path d="M1273.78,581.12 L1289.94,570.01 L1314.18,579.1 L1296,591.22 Z" fill="#3d2f14" opacity="0.95"/><path d="M1400.41,517.065 L1420.68,503.134 L1451.07,514.532 L1428.27,529.73 Z" fill="#7a6842" opacity="0.95"/><path d="M1292.14,612.508 L1304.93,603.715 L1324.12,610.909 L1309.73,620.502 Z" fill="#5d4c28" opacity="0.95"/><path d="M1210.34,693.917 L1221.72,686.096 L1238.78,692.495 L1225.98,701.027 Z" fill="#3d2f14" opacity="0.95"/><path d="M1302.69,570.919 L1319.65,559.254 L1345.1,568.798 L1326.02,581.523 Z" fill="#b3a278" opacity="0.95"/><path d="M1231.83,597.57 L1249.66,585.307 L1276.42,595.341 L1256.35,608.718 Z" fill="#3d2f14" opacity="0.95"/><path d="M1275.21,756.899 L1292.4,745.081 L1318.18,754.75 L1298.85,767.643 Z" fill="#5d4c28" opacity="0.95"/><path d="M1249.4,663.79 L1260.57,656.11 L1277.33,662.394 L1264.76,670.773 Z" fill="#5d4c28" opacity="0.95"/><path d="M1303.72,716.498 L1322.52,703.575 L1350.71,714.148 L1329.56,728.246 Z" fill="#b3a278" opacity="0.95"/><path d="M1135.51,718.316 L1155.43,704.617 L1185.33,715.825 L1162.91,730.771 Z" fill="#94835a" opacity="0.95"/><path d="M1195.13,652.894 L1211.81,641.426 L1236.83,650.809 L1218.06,663.319 Z" fill="#2f230c" opacity="0.95"/><path d="M1158.67,722.54 L1168.32,715.906 L1182.79,721.333 L1171.93,728.57 Z" fill="#b3a278" opacity="0.95"/><path d="M1291.99,614.386 L1312.37,600.373 L1342.95,611.838 L1320.01,627.125 Z" fill="#b3a278" opacity="0.95"/><path d="M1161.97,716.485 L1174.7,707.734 L1193.79,714.893 L1179.47,724.44 Z" fill="#b3a278" opacity="0.95"/><path d="M1306.01,580.073 L1320.68,569.99 L1342.68,578.24 L1326.18,589.239 Z" fill="#94835a" opacity="0.95"/><path d="M1205.24,572.259 L1218.79,562.942 L1239.12,570.565 L1223.87,580.73 Z" fill="#b3a278" opacity="0.95"/><path d="M1291.2,581.505 L1304.41,572.426 L1324.22,579.854 L1309.36,589.759 Z" fill="#2f230c" opacity="0.95"/><path d="M1383.64,614.869 L1398.22,604.85 L1420.08,613.048 L1403.68,623.978 Z" fill="#5d4c28" opacity="0.95"/><path d="M1283.7,702.856 L1298.18,692.902 L1319.9,701.046 L1303.61,711.906 Z" fill="#94835a" opacity="0.95"/><path d="M1291.22,495.5 L1311.13,481.814 L1340.99,493.011 L1318.59,507.941 Z" fill="#7a6842" opacity="0.95"/></g>
<defs><pattern id="chk" width="16" height="16" patternUnits="userSpaceOnUse" patternTransform="rotate(12)"><rect width="16" height="16" fill="#d9ccaa"/><rect width="8" height="8" fill="#5d4b2c"/><rect x="8" y="8" width="8" height="8" fill="#5d4b2c"/><rect x="8" width="8" height="8" fill="#9b8860"/><rect y="8" width="8" height="8" fill="#9b8860"/></pattern><linearGradient id="trg" x1="0" y1="0" x2="1" y2="0"><stop offset="0" stop-color="#6f5f3e"/><stop offset="0.35" stop-color="#8e7e58"/><stop offset="0.75" stop-color="#93835c"/><stop offset="1" stop-color="#7d6d48"/></linearGradient><linearGradient id="skg" x1="0" y1="0" x2="1" y2="0"><stop offset="0" stop-color="#c9b78c"/><stop offset="0.45" stop-color="#e2d5b0"/><stop offset="1" stop-color="#cfbe94"/></linearGradient><linearGradient id="leg" x1="0" y1="0" x2="0" y2="1"><stop offset="0" stop-color="#dccaa0"/><stop offset="1" stop-color="#b49f72"/></linearGradient><linearGradient id="hairg" x1="0" y1="0" x2="1" y2="1"><stop offset="0" stop-color="#5e4a28"/><stop offset="1" stop-color="#33240f"/></linearGradient><filter id="wb"><feGaussianBlur stdDeviation="2.6"/></filter><filter id="wb2"><feGaussianBlur stdDeviation="7"/></filter></defs>
<g transform="translate(383.7,206.6) scale(0.4111)">
<g filter="url(#wb)"><path d="M1130,1386.4 L1200,1356.4 L1260,1286.4 L1400,1256.4 L1440,1316.4 L1500,1426.4 L1560,1556.4 L1620,1726.4 L1680,1876.4 L1740,2016.4 L1800,2046.4 L1900,2056.4 L1965,2068.4 L1960,2106.4 L1900,2128.4 L1740,2126.4 L1600,2156.4 L1400,2186.4 L1260,2191.4 L1170,2156.4 L1150,2076.4 L1145,1856.4 L1135,1656.4 Z" fill="url(#skg)"/><path d="M1135,1436.4 L1200,1396.4 L1230,1656.4 L1250,1956.4 L1260,2191.4 L1170,2156.4 L1150,2076.4 L1145,1856.4 Z" fill="#c5b389" opacity="0.75"/><path d="M1500,1426.4 L1560,1556.4 L1620,1726.4 L1680,1876.4 L1740,2016.4 L1700,2036.4 L1620,1856.4 L1540,1636.4 L1470,1456.4 Z" fill="#bfac82" opacity="0.7"/><path d="M700,1906.4 L900,1926.4 L945,1986.4 L905,2076.4 L790,2136.4 L752,2198.4 L715,2186.4 L668,2086.4 L690,1986.4 Z" fill="#3a2c18"/><path d="M810,1418.4 L870,1356.4 L930,1346.4 L905,1421.4 L870,1438.4 Z" fill="#3d2e1a"/><path d="M900,1936.4 L1060,1916.4 L1142,1956.4 L1147,2068.4 L1060,2108.4 L960,2108.4 L900,2078.4 L942,1986.4 Z" fill="#c6b187"/><path d="M1040,1956.4 L1142,1956.4 L1147,2068.4 L1090,2096.4 L1050,2056.4 Z" fill="#8b7750" opacity="0.8"/><path d="M755,2192.4 L800,2136.4 L870,2102.4 L960,2116.4 L1060,2108.4 L1147,2071.4 L1152,2106.4 L1092,2146.4 L1082,2158.4 L1040,2128.4 L980,2168.4 L900,2198.4 L800,2218.4 Z" fill="#dacaa4"/><path d="M1040,2128.4 L1092,2138.4 L1082,2162.4 L1050,2158.4 Z" fill="#3a2c18"/><path d="M590,1706.4 L650,1646.4 L720,1611.4 L780,1676.4 L850,1786.4 L1142,1756.4 L1142,1858.4 L1000,1908.4 L850,1918.4 L720,1898.4 L640,1858.4 L590,1796.4 Z" fill="url(#leg)"/><path d="M470,1428.4 L560,1396.4 L620,1476.4 L700,1576.4 L722,1608.4 L650,1648.4 L590,1708.4 L580,1758.4 L520,1718.4 L480,1638.4 L470,1538.4 Z" fill="url(#leg)"/><path d="M520,1656.4 L590,1708.4 L650,1648.4 L722,1608.4 L700,1586.4 L600,1636.4 Z" fill="#8f7b52" opacity="0.8"/><path d="M640,1858.4 L720,1898.4 L850,1918.4 L1000,1908.4 L1142,1858.4 L1142,1896.4 L1000,1946.4 L850,1956.4 L720,1936.4 Z" fill="#8f7b52" opacity="0.8"/><path d="M560,1396.4 L640,1386.4 L800,1416.4 L900,1426.4 L1132,1486.4 L1142,1738.4 L850,1788.4 L780,1676.4 L700,1576.4 L620,1476.4 Z" fill="#d3c39a"/><path d="M700,1576.4 L780,1676.4 L850,1788.4 L1142,1738.4 L1142,1696.4 L870,1736.4 L800,1656.4 L740,1586.4 Z" fill="#bba87c" opacity="0.7"/><path d="M900,1336.4 L1000,1366.4 L1132,1386.4 L1125,1488.4 L1000,1456.4 L900,1426.4 L880,1376.4 Z" fill="#d2c197"/></g>
<g filter="url(#wb)"><path d="M115,1356.4 L200,1368.4 L400,1348.4 L465,1326.4 L472,1556.4 L452,1756.4 L442,1956.4 L472,2156.4 L502,2196.4 L240,2234.4 L190,2256.4 L160,1956.4 L135,1656.4 Z" fill="url(#trg)"/><path d="M115,1356.4 L190,1366.4 L215,1756.4 L230,2156.4 L240,2236.4 L190,2256.4 L160,1956.4 L135,1656.4 Z" fill="#65563a" opacity="0.85"/><path d="M340,1376.4 L372,1374.4 L362,1756.4 L342,2156.4 L322,2156.4 L338,1756.4 Z" fill="#6c5c3c" opacity="0.7"/><path d="M240,2234.4 L440,2208.4 L500,2192.4 L590,2216.4 L612,2246.4 L520,2278.4 L260,2308.4 L245,2278.4 Z" fill="#6d5b3a"/><path d="M250,2278.4 L520,2248.4 L612,2246.4 L520,2280.4 L260,2310.4 Z" fill="#3a2c18"/><path d="M180,2266.4 L250,2266.4 L250,2298.4 L185,2298.4 Z" fill="#54442a"/><path d="M505,1176.4 L545,1176.4 L542,1386.4 L510,1392.4 Z" fill="#382a16"/></g>
<g filter="url(#wb)"><path d="M900,600 L960,560 L1040,555 L1025,640 L1060,712 L1150,732 L1250,702 L1290,652 L1340,702 L1400,722 L1432,782 L1422,1002 L1392,1102 L1402,1252 L1380,1340 L940,1340 L900,1182 L860,1022 L850,902 L870,722 Z" fill="#dccfa8"/><path d="M900,600 L960,560 L990,700 L960,900 L960,1150 L990,1340 L940,1340 L900,1182 L860,1022 L850,902 L870,722 Z" fill="#b7a377" opacity="0.75"/><path d="M1150,732 L1250,702 L1240,900 L1200,1100 L1180,1300 L1100,1300 L1140,1000 Z" fill="#c2af84" opacity="0.7"/><path d="M1050,540 L1130,530 L1195,492 L1222,580 L1262,642 L1290,652 L1250,702 L1150,732 L1060,712 L1025,640 L1040,580 Z" fill="#d3bf95"/><path d="M1130,530 L1195,492 L1222,580 L1180,640 L1120,600 Z" fill="#b39e72" opacity="0.7"/><path d="M1262,730 L1332,706 L1412,722 L1446,792 L1442,902 L1422,1012 L1392,1112 L1342,1202 L1300,1290 L1260,1356 L1250,1316 L900,1421 L620,1276 L560,1256 L500,1250 L470,1150 L470,1060 L560,1100 L660,1130 L760,1160 L880,1130 L1000,1180 L1100,1200 L1180,1140 L1232,1000 L1232,900 Z" fill="#e0d0a8"/><path d="M1360,760 L1446,792 L1442,902 L1422,1012 L1392,1112 L1342,1202 L1300,1290 L1280,1250 L1340,1100 L1380,950 Z" fill="#a8936a" opacity="0.75"/><path d="M620,1276 L900,1421 L1250,1316 L1180,1276 L900,1366 L700,1246 Z" fill="#a8936a" opacity="0.7"/><path d="M470,1060 L560,1100 L660,1130 L700,1200 L640,1260 L560,1256 L500,1250 L470,1150 Z" fill="#dccaa2"/><path d="M1030,175 L1060,180 L1090,190 L1120,235 L1140,290 L1180,350 L1200,420 L1190,490 L1130,530 L1060,542 L1000,522 L975,482 L985,442 L975,402 L955,372 L960,350 L990,312 L1005,262 L1015,212 Z" fill="#e2d2ac"/><path d="M1090,330 L1180,350 L1200,420 L1190,490 L1130,530 L1090,500 L1080,420 Z" fill="#c3ad82" opacity="0.7"/><path d="M985,430 L1040,440 L1035,462 L1000,470 Z" fill="#f3ecd8"/><path d="M1015,350 Q1045,362 1075,345" stroke="#4d3a1e" stroke-width="7" fill="none"/><path d="M980,428 Q1012,445 1045,436" stroke="#6b5432" stroke-width="5" fill="none"/></g>
<g filter="url(#wb)"><path d="M1030,165 L1080,110 L1180,95 L1290,85 L1380,140 L1440,220 L1470,330 L1460,420 L1490,470 L1460,540 L1420,600 L1340,640 L1260,620 L1210,560 L1190,490 L1200,420 L1180,350 L1140,290 L1120,230 L1090,190 L1060,180 Z" fill="url(#hairg)"/><path d="M1080,130 L1180,105 L1260,120 L1300,200 L1280,300 L1230,240 L1150,180 Z" fill="#6e5832" opacity="0.55"/><path d="M1300,330 L1400,300 L1440,420 L1400,540 L1330,560 L1340,440 Z" fill="#5a4626" opacity="0.5"/></g>
<g filter="url(#wb)"><path d="M-20,660 L40,570 L220,555 L300,680 L322,762 L282,792 L142,802 L92,702 L87,882 L142,1002 L302,1092 L422,1092 L452,1202 L465,1345 L400,1352 L137,1378 L64,1200 L-15,900 Z" fill="#3b2f1e"/><path d="M30,500 L200,490 L240,540 L222,562 L40,577 Z" fill="url(#chk)"/><path d="M100,660 L200,600 L290,650 L340,800 L400,900 L426,940 L382,1092 L332,1097 L182,1012 L122,862 Z" fill="url(#chk)"/><path d="M100,660 L160,625 L200,800 L260,1000 L182,1012 L122,862 Z" fill="#4d3d24" opacity="0.35"/><path d="M370,790 L430,730 L482,720 L506,800 L472,832 L422,872 L386,852 Z" fill="#cfbb90"/><path d="M420,940 L520,915 L620,930 L662,982 L642,1042 L562,1052 L472,1022 L416,992 Z" fill="#d5c197"/><path d="M160,425 L240,380 L265,410 L285,375 L320,360 L370,370 L430,400 L456,442 L432,482 L402,532 L352,592 L302,602 L252,562 L236,502 L200,482 Z" fill="#c7b289"/><path d="M300,500 L402,532 L352,592 L302,602 L252,562 Z" fill="#ab9568" opacity="0.7"/><path d="M160,425 L236,502 L252,562 L230,580 L190,520 Z" fill="#b39e74"/><ellipse cx="300" cy="410" rx="25" ry="40" fill="#d6c298" transform="rotate(10 300 410)"/><ellipse cx="300" cy="414" rx="11" ry="22" fill="#9c8760" transform="rotate(10 300 414)"/><path d="M405,462 Q430,470 450,458" stroke="#4d3a1e" stroke-width="6" fill="none"/></g>
<g filter="url(#wb)"><path d="M135,240 L160,180 L220,140 L300,128 L380,155 L450,220 L495,300 L516,376 L476,402 L466,436 L420,396 L370,370 L320,360 L286,376 L266,410 L240,380 L200,400 L160,426 L138,340 Z" fill="#4a391d"/><path d="M200,170 L300,140 L380,170 L440,250 L400,260 L330,200 L240,200 Z" fill="#6b5530" opacity="0.55"/></g>
<g filter="url(#wb)"><path d="M543.9,585 L499.847,600.621 L531.63,631.078 L484.032,628.769 L497.25,668.031 L455.535,648.248 L447.57,688.537 L420,655.2 L392.43,688.537 L384.465,648.248 L342.75,668.031 L355.968,628.769 L308.37,631.078 L340.153,600.621 L296.1,585 L340.153,569.379 L308.37,538.922 L355.968,541.231 L342.75,501.969 L384.465,521.752 L392.43,481.463 L420,514.8 L447.57,481.463 L455.535,521.752 L497.25,501.969 L484.032,541.231 L531.63,538.922 L499.847,569.379 Z" fill="#b9a577"/><path d="M501.445,603.947 L465.052,610.361 L477.737,641.723 L444.106,627.66 L433.885,659.743 L415.861,630.575 L386.639,651.124 L391.107,617.991 L354.046,619.157 L379.299,594.716 L348.555,576.053 L384.948,569.639 L372.263,538.277 L405.894,552.34 L416.115,520.257 L434.139,549.425 L463.361,528.876 L458.893,562.009 L495.954,560.843 L470.701,585.284 Z" fill="#d3c195"/><ellipse cx="430" cy="600" rx="34" ry="28" fill="#8b7648"/><path d="M440,665 L462,770" stroke="#382a16" stroke-width="14" fill="none"/><path d="M480,830 L505,1000 L525,1200" stroke="#382a16" stroke-width="24" fill="none"/><path d="M520,800 L652,730 L602,832 L542,902 L500,882 Z" fill="#493a20"/><path d="M420,882 L500,832 L522,902 L462,932 Z" fill="#54442a"/><path d="M640,1020 L732,1040 L690,1052 L650,1040 Z" fill="#6b5a38"/></g>
</g>
<rect x="60" y="60" width="1700" height="1220" fill="url(#pvig)"/>
<rect x="60" y="60" width="1700" height="1220" filter="url(#grain)" opacity="0.5"/>
</g>
</g>
<rect x="1189.2" y="126.2" width="1601" height="901" fill="none" stroke="#5c6a78" stroke-width="1.6"/>
<rect x="1190.9" y="127.9" width="1597.7" height="897.7" fill="none" stroke="#fff" stroke-width="2.2" stroke-dasharray="8 7"/>
<path d="M1989.5,127 V1026 M1190,576.5 H2789" stroke="#e01010" stroke-width="1" stroke-dasharray="2.2 2.2" fill="none"/>
<rect x="1390.5" y="901" width="1199" height="71.2" fill="none" stroke="#000" stroke-width="2.2"/>
<rect x="1390.5" y="901" width="1199" height="71.2" fill="none" stroke="#fff" stroke-width="2.2" stroke-dasharray="4 3.2"/>
<defs><radialGradient id="hg" cx="0.35" cy="0.3" r="0.9"><stop offset="0" stop-color="#55668a"/><stop offset="0.6" stop-color="#27334f"/><stop offset="1" stop-color="#10182c"/></radialGradient><radialGradient id="hg2" cx="0.4" cy="0.35" r="0.8"><stop offset="0" stop-color="#b8bcc8"/><stop offset="1" stop-color="#6c7388"/></radialGradient></defs>
<circle cx="1190.3" cy="127.3" r="12.4" fill="#fff" stroke="#8e97a5" stroke-width="0.8"/><circle cx="1190.3" cy="127.3" r="9.8" fill="url(#hg)"/>
<circle cx="1989.5" cy="127.3" r="12.4" fill="#fff" stroke="#8e97a5" stroke-width="0.8"/><circle cx="1989.5" cy="127.3" r="9.8" fill="url(#hg)"/>
<circle cx="2789.0" cy="127.3" r="12.4" fill="#fff" stroke="#8e97a5" stroke-width="0.8"/><circle cx="2789.0" cy="127.3" r="9.8" fill="url(#hg)"/>
<circle cx="1190.3" cy="576.5" r="12.4" fill="#fff" stroke="#8e97a5" stroke-width="0.8"/><circle cx="1190.3" cy="576.5" r="9.8" fill="url(#hg)"/>
<circle cx="2789.0" cy="576.5" r="12.4" fill="#fff" stroke="#8e97a5" stroke-width="0.8"/><circle cx="2789.0" cy="576.5" r="9.8" fill="url(#hg)"/>
<circle cx="1190.3" cy="1026.0" r="12.4" fill="#fff" stroke="#8e97a5" stroke-width="0.8"/><circle cx="1190.3" cy="1026.0" r="9.8" fill="url(#hg)"/>
<circle cx="1989.5" cy="1026.0" r="12.4" fill="#fff" stroke="#8e97a5" stroke-width="0.8"/><circle cx="1989.5" cy="1026.0" r="9.8" fill="url(#hg)"/>
<circle cx="2789.0" cy="1026.0" r="12.4" fill="#fff" stroke="#8e97a5" stroke-width="0.8"/><circle cx="2789.0" cy="1026.0" r="9.8" fill="url(#hg)"/>
<circle cx="1989.5" cy="576.5" r="11" fill="#d8dce4" stroke="#7c8496" stroke-width="1"/><circle cx="1989.5" cy="576.5" r="9" fill="url(#hg2)"/>
<path d="M1987.5,576.5 l-5,-3.4 v6.8 Z M1991.5,576.5 l5,-3.4 v6.8 Z" fill="#8d93a6"/>
<circle cx="1989.5" cy="936.8" r="11" fill="#d8dce4" stroke="#7c8496" stroke-width="1"/><circle cx="1989.5" cy="936.8" r="9" fill="url(#hg2)"/>
<path d="M1987.5,936.8 l-5,-3.4 v6.8 Z M1991.5,936.8 l5,-3.4 v6.8 Z" fill="#8d93a6"/>
<path d="M1989.5,560 V593 M1989.5,925 V948" stroke="#e01010" stroke-width="1" stroke-dasharray="2.2 2.2"/>
<g transform="translate(2804,145) rotate(-46)"><rect x="-1" y="-2.7" width="20" height="5.4" fill="#fff" stroke="#000" stroke-width="1.9"/><path d="M-1,-2.9 L-5,-4.4 Q-13,-3.6 -17.5,4.6 Q-8,6.4 -4.4,4 L-1,2.9 Z" fill="#fff" stroke="#000" stroke-width="1.9" stroke-linejoin="round"/><circle cx="-1.5" cy="0" r="1.2" fill="#000"/></g>
<path d="M1154.2,1051.2 L1177.2,1063 L1154.2,1074.8 Z" fill="#6b7280" stroke="#111" stroke-width="2.2" stroke-linejoin="round"/>
<path d="M1200.2,1048.8 H1207.8 V1053 L1204,1056.4 L1200.2,1053 Z" fill="none" stroke="#111" stroke-width="2"/><path d="M1204,1055 V1076" stroke="#111" stroke-width="2.4"/><path d="M1210,1059.5 L1222.4,1067.3 L1210,1075 Z" fill="#6b7280" stroke="#111" stroke-width="2" stroke-linejoin="round"/>
<path d="M1241.4,1056.8 L1259.3,1056.8 L1250.3,1066.4 Z" fill="#2d3748"/>
<path d="M1296,1051 L1283.2,1063 L1296,1075 Z M1309,1051 L1296.2,1063 L1309,1075 Z" fill="none" stroke="#666a70" stroke-width="2.2" stroke-linejoin="miter"/>
<path d="M1353.5,1051 L1331.5,1063 L1353.5,1075 Z" fill="none" stroke="#666a70" stroke-width="2.2"/><path d="M1330.4,1050 V1076" stroke="#666a70" stroke-width="2.2"/>
<path d="M1376,1051 L1398,1063 L1376,1075 Z" fill="none" stroke="#666a70" stroke-width="2.2"/><path d="M1399.8,1050 V1076" stroke="#666a70" stroke-width="2.2"/>
<path d="M1421,1051 L1433.8,1063 L1421,1075 Z M1433.8,1051 L1446.6,1063 L1433.8,1075 Z" fill="none" stroke="#666a70" stroke-width="2.2"/>
<text x="1501.5" y="1072.5" font-size="24.00" fill="#2c3c58" textLength="99.6" lengthAdjust="spacingAndGlyphs">00:00.000</text>
<path d="M1659.5,1048.8 H1667.1 V1053 L1663.3,1056.4 L1659.5,1053 Z" fill="none" stroke="#111" stroke-width="2"/><path d="M1663.3,1055 V1076" stroke="#111" stroke-width="2.4"/>
<path d="M1668.5,1066 Q1676,1057.5 1683.5,1066 Q1676,1074.5 1668.5,1066 Z" fill="none" stroke="#111" stroke-width="2.1"/><circle cx="1676" cy="1065.6" r="3" fill="#111"/>
<text x="1694.0" y="1072.5" font-size="24.00" fill="#2c3c58" textLength="130.7" lengthAdjust="spacingAndGlyphs">Live preview</text>
<rect x="1843" y="1048.8" width="20.5" height="15.4" fill="none" stroke="#111" stroke-width="2"/><path d="M1849.5,1052.6 L1857.6,1056.5 L1849.5,1060.4 Z" fill="none" stroke="#111" stroke-width="1.6"/><path d="M1839,1072 H1858" stroke="#111" stroke-width="2.6" stroke-dasharray="3.4 2.4"/><path d="M1859.5,1068 L1866,1072 L1859.5,1076 Z" fill="#111"/>
<path d="M1882.4,1056.8 L1900.7,1056.8 L1891.6,1066.4 Z" fill="#2d3748"/>
<rect x="1923" y="1063" width="4.6" height="13" fill="#111"/><rect x="1930.4" y="1053" width="4.6" height="23" fill="#111"/><path d="M1931,1049 H1942 M1937.5,1053 H1942 M1937.5,1057 H1940.5 M1937.5,1061 H1942 M1937.5,1065 H1940.5 M1937.5,1069 H1942 M1937.5,1073 H1940.5" stroke="#111" stroke-width="1.2" stroke-dasharray="3 1.2"/>
<circle cx="2407.0" cy="1058.0" r="11.2" fill="#0e4671"/><rect x="2400.2" y="1056.7" width="13.6" height="2.6" fill="#fff"/>
<circle cx="2752.6" cy="1058.0" r="11.2" fill="#0e4671"/><rect x="2745.8" y="1056.7" width="13.6" height="2.6" fill="#fff"/><rect x="2751.3" y="1051.2" width="2.6" height="13.6" fill="#fff"/>
<rect x="2430.0" y="1054.7" width="300.0" height="6.6" rx="3.3" fill="#8f9bab"/>
<circle cx="2626.6" cy="1058.0" r="8.5" fill="#2675ae"/>
<rect x="2438.5" y="1070.8" width="1.3" height="9.0" fill="#2a3038"/>
<rect x="2485.6" y="1070.8" width="1.3" height="5.5" fill="#2a3038"/>
<rect x="2532.6" y="1070.8" width="1.3" height="5.5" fill="#2a3038"/>
<rect x="2579.6" y="1070.8" width="1.3" height="5.5" fill="#2a3038"/>
<rect x="2626.7" y="1070.8" width="1.3" height="5.5" fill="#2a3038"/>
<rect x="2673.7" y="1070.8" width="1.3" height="5.5" fill="#2a3038"/>
<rect x="2720.7" y="1070.8" width="1.3" height="9.0" fill="#2a3038"/>
<circle cx="2805.8" cy="1058.6" r="9.8" fill="none" stroke="#000" stroke-width="2.6"/><path d="M2798.6,1066 L2790,1074.8" stroke="#000" stroke-width="3" fill="none"/><rect x="2801" y="1053.8" width="9.6" height="9.6" fill="none" stroke="#000" stroke-width="1.8"/>
<text x="41.0" y="1158.9" font-size="22.70" fill="#1c2a40" textLength="81.7" lengthAdjust="spacingAndGlyphs">Timeline</text>
<text x="165.3" y="1158.9" font-size="22.70" fill="#1c2a40" textLength="105.0" lengthAdjust="spacingAndGlyphs">Storyboard</text>
<rect x="142.8" y="1180" width="1.3" height="7" fill="#5d7690"/>
<text x="143.4" y="1200.8" font-size="11.80" fill="#7f9cb8" text-anchor="middle" textLength="19.8" lengthAdjust="spacingAndGlyphs">500</text>
<rect x="192.4" y="1180" width="1.3" height="15" fill="#5d7690"/>
<rect x="242.1" y="1180" width="1.3" height="7" fill="#5d7690"/>
<text x="242.8" y="1200.8" font-size="11.80" fill="#7f9cb8" text-anchor="middle" textLength="19.8" lengthAdjust="spacingAndGlyphs">500</text>
<rect x="291.8" y="1180" width="1.3" height="15" fill="#5d7690"/>
<rect x="341.4" y="1180" width="1.3" height="7" fill="#5d7690"/>
<text x="342.1" y="1200.8" font-size="11.80" fill="#7f9cb8" text-anchor="middle" textLength="19.8" lengthAdjust="spacingAndGlyphs">500</text>
<rect x="391.1" y="1180" width="1.3" height="15" fill="#5d7690"/>
<rect x="440.7" y="1180" width="1.3" height="7" fill="#5d7690"/>
<text x="441.4" y="1200.8" font-size="11.80" fill="#7f9cb8" text-anchor="middle" textLength="19.8" lengthAdjust="spacingAndGlyphs">500</text>
<rect x="490.4" y="1180" width="1.3" height="15" fill="#5d7690"/>
<rect x="540.0" y="1180" width="1.3" height="7" fill="#5d7690"/>
<text x="540.6" y="1200.8" font-size="11.80" fill="#7f9cb8" text-anchor="middle" textLength="19.8" lengthAdjust="spacingAndGlyphs">500</text>
<text x="94.5" y="1222.7" font-size="22.50" fill="#5d7690" textLength="54.0" lengthAdjust="spacingAndGlyphs">00:00</text>
<text x="191.9" y="1222.7" font-size="22.50" fill="#5d7690" text-anchor="middle" textLength="54.6" lengthAdjust="spacingAndGlyphs">00:01</text>
<text x="291.2" y="1222.7" font-size="22.50" fill="#5d7690" text-anchor="middle" textLength="54.6" lengthAdjust="spacingAndGlyphs">00:02</text>
<text x="390.5" y="1222.7" font-size="22.50" fill="#5d7690" text-anchor="middle" textLength="54.6" lengthAdjust="spacingAndGlyphs">00:03</text>
<text x="489.8" y="1222.7" font-size="22.50" fill="#5d7690" text-anchor="middle" textLength="54.6" lengthAdjust="spacingAndGlyphs">00:04</text>
<g stroke="#fff" fill="none" stroke-width="3" stroke-linecap="round"><path d="M159.5,1182 L150,1206"/><path d="M171,1194.5 L152,1201"/><circle cx="141.5" cy="1199.8" r="4.2"/><circle cx="151.8" cy="1211.6" r="4.2"/><path d="M145.5,1201.5 L153,1203.5"/></g>
<path d="M196.6,1189.3 H207.5 V1209 L196.6,1198.5 Z M224.2,1189.3 H213 V1209 L224.2,1198.5 Z" fill="#fff"/>
<rect x="209.6" y="1193" width="1.2" height="16" fill="#dfe9f3"/>
<path d="M78,1174 H110 V1195 L94,1212 L78,1195 Z" fill="#000"/>
<rect x="92.1" y="1212" width="3.8" height="262" fill="#000"/><rect x="94.2" y="1196" width="1.3" height="19" fill="#2a7ec4"/>
<g stroke="#000" fill="none" stroke-width="2.6"><rect x="27" y="1184" width="7" height="7"/><rect x="39.4" y="1184" width="7" height="7"/><rect x="51.8" y="1184" width="7" height="7"/></g>
<g stroke="#000" fill="none" stroke-width="3"><path d="M30.5,1197.5 V1216.5 M42.9,1197.5 V1216.5 M55.3,1197.5 V1216.5"/><path d="M27,1215.5 L59,1185" stroke-width="2.8"/></g>
<g stroke="#000" fill="none" stroke-width="2.8"><rect x="27" y="1241" width="19" height="19"/><path d="M36.5,1245 V1256 M31,1250.5 H42"/><path d="M46,1254 H59.4 V1272.4 H41 V1260"/><path d="M50.2,1258.5 V1268.5 M45.2,1263.5 H55.2" /></g>
<g stroke="#000" fill="none" stroke-width="2.8"><rect x="27" y="1293.2" width="19" height="19"/><path d="M31,1302.7 H42"/><path d="M46,1306.2 H59.4 V1324.6 H41 V1312.2"/><path d="M45.2,1315.7 H55.2"/></g>
<g stroke="#000" fill="none" stroke-width="2.8"><rect x="32.5" y="1356.0" width="21" height="20.5"/><path d="M37.5,1364.5 H48.5" stroke-width="2.4"/>
<path d="M26.5,1350.0 L32.5,1356.0" stroke-width="2.4"/>
<path d="M32.5,1356.0 h-6.5 M32.5,1356.0 v-6.5" stroke-width="2.4"/>
<path d="M59.5,1350.0 L53.5,1356.0" stroke-width="2.4"/>
<path d="M53.5,1356.0 h6.5 M53.5,1356.0 v-6.5" stroke-width="2.4"/>
<path d="M26.5,1383.0 L32.5,1376.5" stroke-width="2.4"/>
<path d="M32.5,1376.5 h-6.5 M32.5,1376.5 v6.5" stroke-width="2.4"/>
<path d="M59.5,1383.0 L53.5,1376.5" stroke-width="2.4"/>
<path d="M53.5,1376.5 h6.5 M53.5,1376.5 v6.5" stroke-width="2.4"/>
</g>
<path d="M38.7,1390.3 L46.8,1398 L38.7,1405.6 Z" fill="#2d3748"/>
<g stroke="#000" fill="none" stroke-width="2.8"><rect x="32.5" y="1431.0" width="21" height="20.5"/><path d="M37.5,1439.5 H48.5" stroke-width="2.4"/>
<path d="M26.5,1425.0 L32.5,1431.0" stroke-width="2.4"/>
<path d="M26.5,1425.0 h6.0 M26.5,1425.0 v6.0" stroke-width="2.4"/>
<path d="M59.5,1425.0 L53.5,1431.0" stroke-width="2.4"/>
<path d="M59.5,1425.0 h-6.0 M59.5,1425.0 v6.0" stroke-width="2.4"/>
<path d="M26.5,1458.0 L32.5,1451.5" stroke-width="2.4"/>
<path d="M26.5,1458.0 h6.0 M26.5,1458.0 v-6.0" stroke-width="2.4"/>
<path d="M59.5,1458.0 L53.5,1451.5" stroke-width="2.4"/>
<path d="M59.5,1458.0 h-6.0 M59.5,1458.0 v-6.0" stroke-width="2.4"/>
</g>
<rect x="103.2" y="1239.8" width="20" height="6" fill="#000"/>
<text x="138.4" y="1251.8" font-size="22.40" fill="#000" font-weight="bold" textLength="89.0" lengthAdjust="spacingAndGlyphs">Chapter</text>
<g fill="#ffe100">
<path d="M101,1269 H115 V1276 H108 V1283 H101 Z M582.8,1269 H568.8 V1276 H575.8 V1283 H582.8 Z M101,1382.4 H115 V1375.4 H108 V1368.4 H101 Z M582.8,1382.4 H568.8 V1375.4 H575.8 V1368.4 H582.8 Z"/>
<rect x="120.3" y="1269" width="5.4" height="7"/><rect x="120.3" y="1375.4" width="5.4" height="7"/>
<rect x="131.3" y="1269" width="5.4" height="7"/><rect x="131.3" y="1375.4" width="5.4" height="7"/>
<rect x="142.3" y="1269" width="5.4" height="7"/><rect x="142.3" y="1375.4" width="5.4" height="7"/>
<rect x="153.3" y="1269" width="5.4" height="7"/><rect x="153.3" y="1375.4" width="5.4" height="7"/>
<rect x="164.3" y="1269" width="5.4" height="7"/><rect x="164.3" y="1375.4" width="5.4" height="7"/>
<rect x="175.3" y="1269" width="5.4" height="7"/><rect x="175.3" y="1375.4" width="5.4" height="7"/>
<rect x="186.3" y="1269" width="5.4" height="7"/><rect x="186.3" y="1375.4" width="5.4" height="7"/>
<rect x="197.3" y="1269" width="5.4" height="7"/><rect x="197.3" y="1375.4" width="5.4" height="7"/>
<rect x="208.3" y="1269" width="5.4" height="7"/><rect x="208.3" y="1375.4" width="5.4" height="7"/>
<rect x="219.3" y="1269" width="5.4" height="7"/><rect x="219.3" y="1375.4" width="5.4" height="7"/>
<rect x="230.3" y="1269" width="5.4" height="7"/><rect x="230.3" y="1375.4" width="5.4" height="7"/>
<rect x="241.3" y="1269" width="5.4" height="7"/><rect x="241.3" y="1375.4" width="5.4" height="7"/>
<rect x="252.3" y="1269" width="5.4" height="7"/><rect x="252.3" y="1375.4" width="5.4" height="7"/>
<rect x="263.3" y="1269" width="5.4" height="7"/><rect x="263.3" y="1375.4" width="5.4" height="7"/>
<rect x="274.3" y="1269" width="5.4" height="7"/><rect x="274.3" y="1375.4" width="5.4" height="7"/>
<rect x="285.3" y="1269" width="5.4" height="7"/><rect x="285.3" y="1375.4" width="5.4" height="7"/>
<rect x="296.3" y="1269" width="5.4" height="7"/><rect x="296.3" y="1375.4" width="5.4" height="7"/>
<rect x="307.3" y="1269" width="5.4" height="7"/><rect x="307.3" y="1375.4" width="5.4" height="7"/>
<rect x="318.3" y="1269" width="5.4" height="7"/><rect x="318.3" y="1375.4" width="5.4" height="7"/>
<rect x="329.3" y="1269" width="5.4" height="7"/><rect x="329.3" y="1375.4" width="5.4" height="7"/>
<rect x="340.3" y="1269" width="5.4" height="7"/><rect x="340.3" y="1375.4" width="5.4" height="7"/>
<rect x="351.3" y="1269" width="5.4" height="7"/><rect x="351.3" y="1375.4" width="5.4" height="7"/>
<rect x="362.3" y="1269" width="5.4" height="7"/><rect x="362.3" y="1375.4" width="5.4" height="7"/>
<rect x="373.3" y="1269" width="5.4" height="7"/><rect x="373.3" y="1375.4" width="5.4" height="7"/>
<rect x="384.3" y="1269" width="5.4" height="7"/><rect x="384.3" y="1375.4" width="5.4" height="7"/>
<rect x="395.3" y="1269" width="5.4" height="7"/><rect x="395.3" y="1375.4" width="5.4" height="7"/>
<rect x="406.3" y="1269" width="5.4" height="7"/><rect x="406.3" y="1375.4" width="5.4" height="7"/>
<rect x="417.3" y="1269" width="5.4" height="7"/><rect x="417.3" y="1375.4" width="5.4" height="7"/>
<rect x="428.3" y="1269" width="5.4" height="7"/><rect x="428.3" y="1375.4" width="5.4" height="7"/>
<rect x="439.3" y="1269" width="5.4" height="7"/><rect x="439.3" y="1375.4" width="5.4" height="7"/>
<rect x="450.3" y="1269" width="5.4" height="7"/><rect x="450.3" y="1375.4" width="5.4" height="7"/>
<rect x="461.3" y="1269" width="5.4" height="7"/><rect x="461.3" y="1375.4" width="5.4" height="7"/>
<rect x="472.3" y="1269" width="5.4" height="7"/><rect x="472.3" y="1375.4" width="5.4" height="7"/>
<rect x="483.3" y="1269" width="5.4" height="7"/><rect x="483.3" y="1375.4" width="5.4" height="7"/>
<rect x="494.3" y="1269" width="5.4" height="7"/><rect x="494.3" y="1375.4" width="5.4" height="7"/>
<rect x="505.3" y="1269" width="5.4" height="7"/><rect x="505.3" y="1375.4" width="5.4" height="7"/>
<rect x="516.3" y="1269" width="5.4" height="7"/><rect x="516.3" y="1375.4" width="5.4" height="7"/>
<rect x="527.3" y="1269" width="5.4" height="7"/><rect x="527.3" y="1375.4" width="5.4" height="7"/>
<rect x="538.3" y="1269" width="5.4" height="7"/><rect x="538.3" y="1375.4" width="5.4" height="7"/>
<rect x="549.3" y="1269" width="5.4" height="7"/><rect x="549.3" y="1375.4" width="5.4" height="7"/>
<rect x="560.3" y="1269" width="5.4" height="7"/><rect x="560.3" y="1375.4" width="5.4" height="7"/>
<rect x="101" y="1287.6" width="7" height="5.4"/><rect x="575.8" y="1287.6" width="7" height="5.4"/>
<rect x="101" y="1298.6" width="7" height="5.4"/><rect x="575.8" y="1298.6" width="7" height="5.4"/>
<rect x="101" y="1309.6" width="7" height="5.4"/><rect x="575.8" y="1309.6" width="7" height="5.4"/>
<rect x="101" y="1320.6" width="7" height="5.4"/><rect x="575.8" y="1320.6" width="7" height="5.4"/>
<rect x="101" y="1331.6" width="7" height="5.4"/><rect x="575.8" y="1331.6" width="7" height="5.4"/>
<rect x="101" y="1342.6" width="7" height="5.4"/><rect x="575.8" y="1342.6" width="7" height="5.4"/>
<rect x="101" y="1353.6" width="7" height="5.4"/><rect x="575.8" y="1353.6" width="7" height="5.4"/>
</g>
<defs><clipPath id="mc"><rect x="113" y="1286.7" width="114" height="77.6"/></clipPath><filter id="mb"><feGaussianBlur stdDeviation="1.1"/></filter></defs>
<g clip-path="url(#mc)"><rect x="113" y="1286.7" width="114" height="78" fill="#9c9a9c"/><g filter="url(#mb)"><rect x="113" y="1286" width="60" height="45" fill="#b9b7b6"/><rect x="170" y="1286" width="30" height="40" fill="#5a5654"/><rect x="196" y="1286" width="32" height="30" fill="#cfccca"/><path d="M113,1330 L150,1322 L190,1340 L227,1364 L113,1364 Z" fill="#a08c86"/><path d="M176,1318 L227,1306 L227,1364 L196,1352 L176,1338 Z" fill="#3a3036"/><path d="M178,1312 L200,1306 L227,1300 L227,1330 L200,1334 L180,1328 Z" fill="#a8323c"/><path d="M205,1304 L227,1298 L227,1322 L208,1326 Z" fill="#b8b8a8"/><ellipse cx="140" cy="1302" rx="6" ry="6.5" fill="#3a2c26"/><rect x="134" y="1309" width="12" height="22" fill="#3c3236"/><rect x="136" y="1330" width="9" height="28" fill="#6e5f56"/><ellipse cx="167" cy="1303" rx="7" ry="8" fill="#2e2220"/><ellipse cx="163" cy="1306" rx="4" ry="5" fill="#d8b8a4"/><path d="M160,1314 L174,1314 L178,1334 L186,1356 L158,1356 L150,1340 L156,1332 Z" fill="#a9bfc2"/><path d="M146,1332 L160,1330 L160,1344 L150,1350 Z" fill="#d2ac98"/><rect x="150" y="1346" width="12" height="10" fill="#2a2226"/><ellipse cx="146" cy="1313" rx="4" ry="4" fill="#c83c78"/></g></g>
<rect x="239.3" y="1313.8" width="25" height="25" fill="none" stroke="#10161e" stroke-width="2.2"/><path d="M264.3,1313.8 V1338.8 H239.3 Z" fill="#10161e"/>
<text x="242.0" y="1325.5" font-size="12.00" fill="#10161e" font-weight="bold" textLength="9.0" lengthAdjust="spacingAndGlyphs">A</text>
<text x="253.5" y="1337.0" font-size="11.00" fill="#526070" font-weight="bold" textLength="8.0" lengthAdjust="spacingAndGlyphs">B</text>
<rect x="279.5" y="1313.8" width="25" height="25" fill="none" stroke="#10161e" stroke-width="2.2"/><path d="M287,1320 L298,1326.3 L287,1332.6 Z" fill="none" stroke="#10161e" stroke-width="1.8"/>
<text x="313.0" y="1335.7" font-size="22.00" fill="#18222e" font-weight="bold" textLength="58.0" lengthAdjust="spacingAndGlyphs">00:05</text>
<text x="383.0" y="1335.7" font-size="22.00" fill="#18222e" font-weight="bold" textLength="132.4" lengthAdjust="spacingAndGlyphs">Family 5.jpg</text>
<text x="117.6" y="1459.6" font-size="30.40" fill="#8890a2" font-weight="bold" textLength="109.8" lengthAdjust="spacingAndGlyphs">Track 2</text>
<path d="M387.2,968 V1131.5 H346 Q341.5,1131.5 343.5,1136 L398,1292 Q400.5,1297 403,1292 L458,1136 Q460,1131.5 455.5,1131.5 H414.8 V968" fill="#fff" stroke="#14426b" stroke-width="5.4" stroke-linejoin="round"/>
<text x="261.7" y="1335.2" font-size="24.00" fill="#ffffff" textLength="160.3" lengthAdjust="spacingAndGlyphs">Apply template</text>
</svg>
</body></html>
